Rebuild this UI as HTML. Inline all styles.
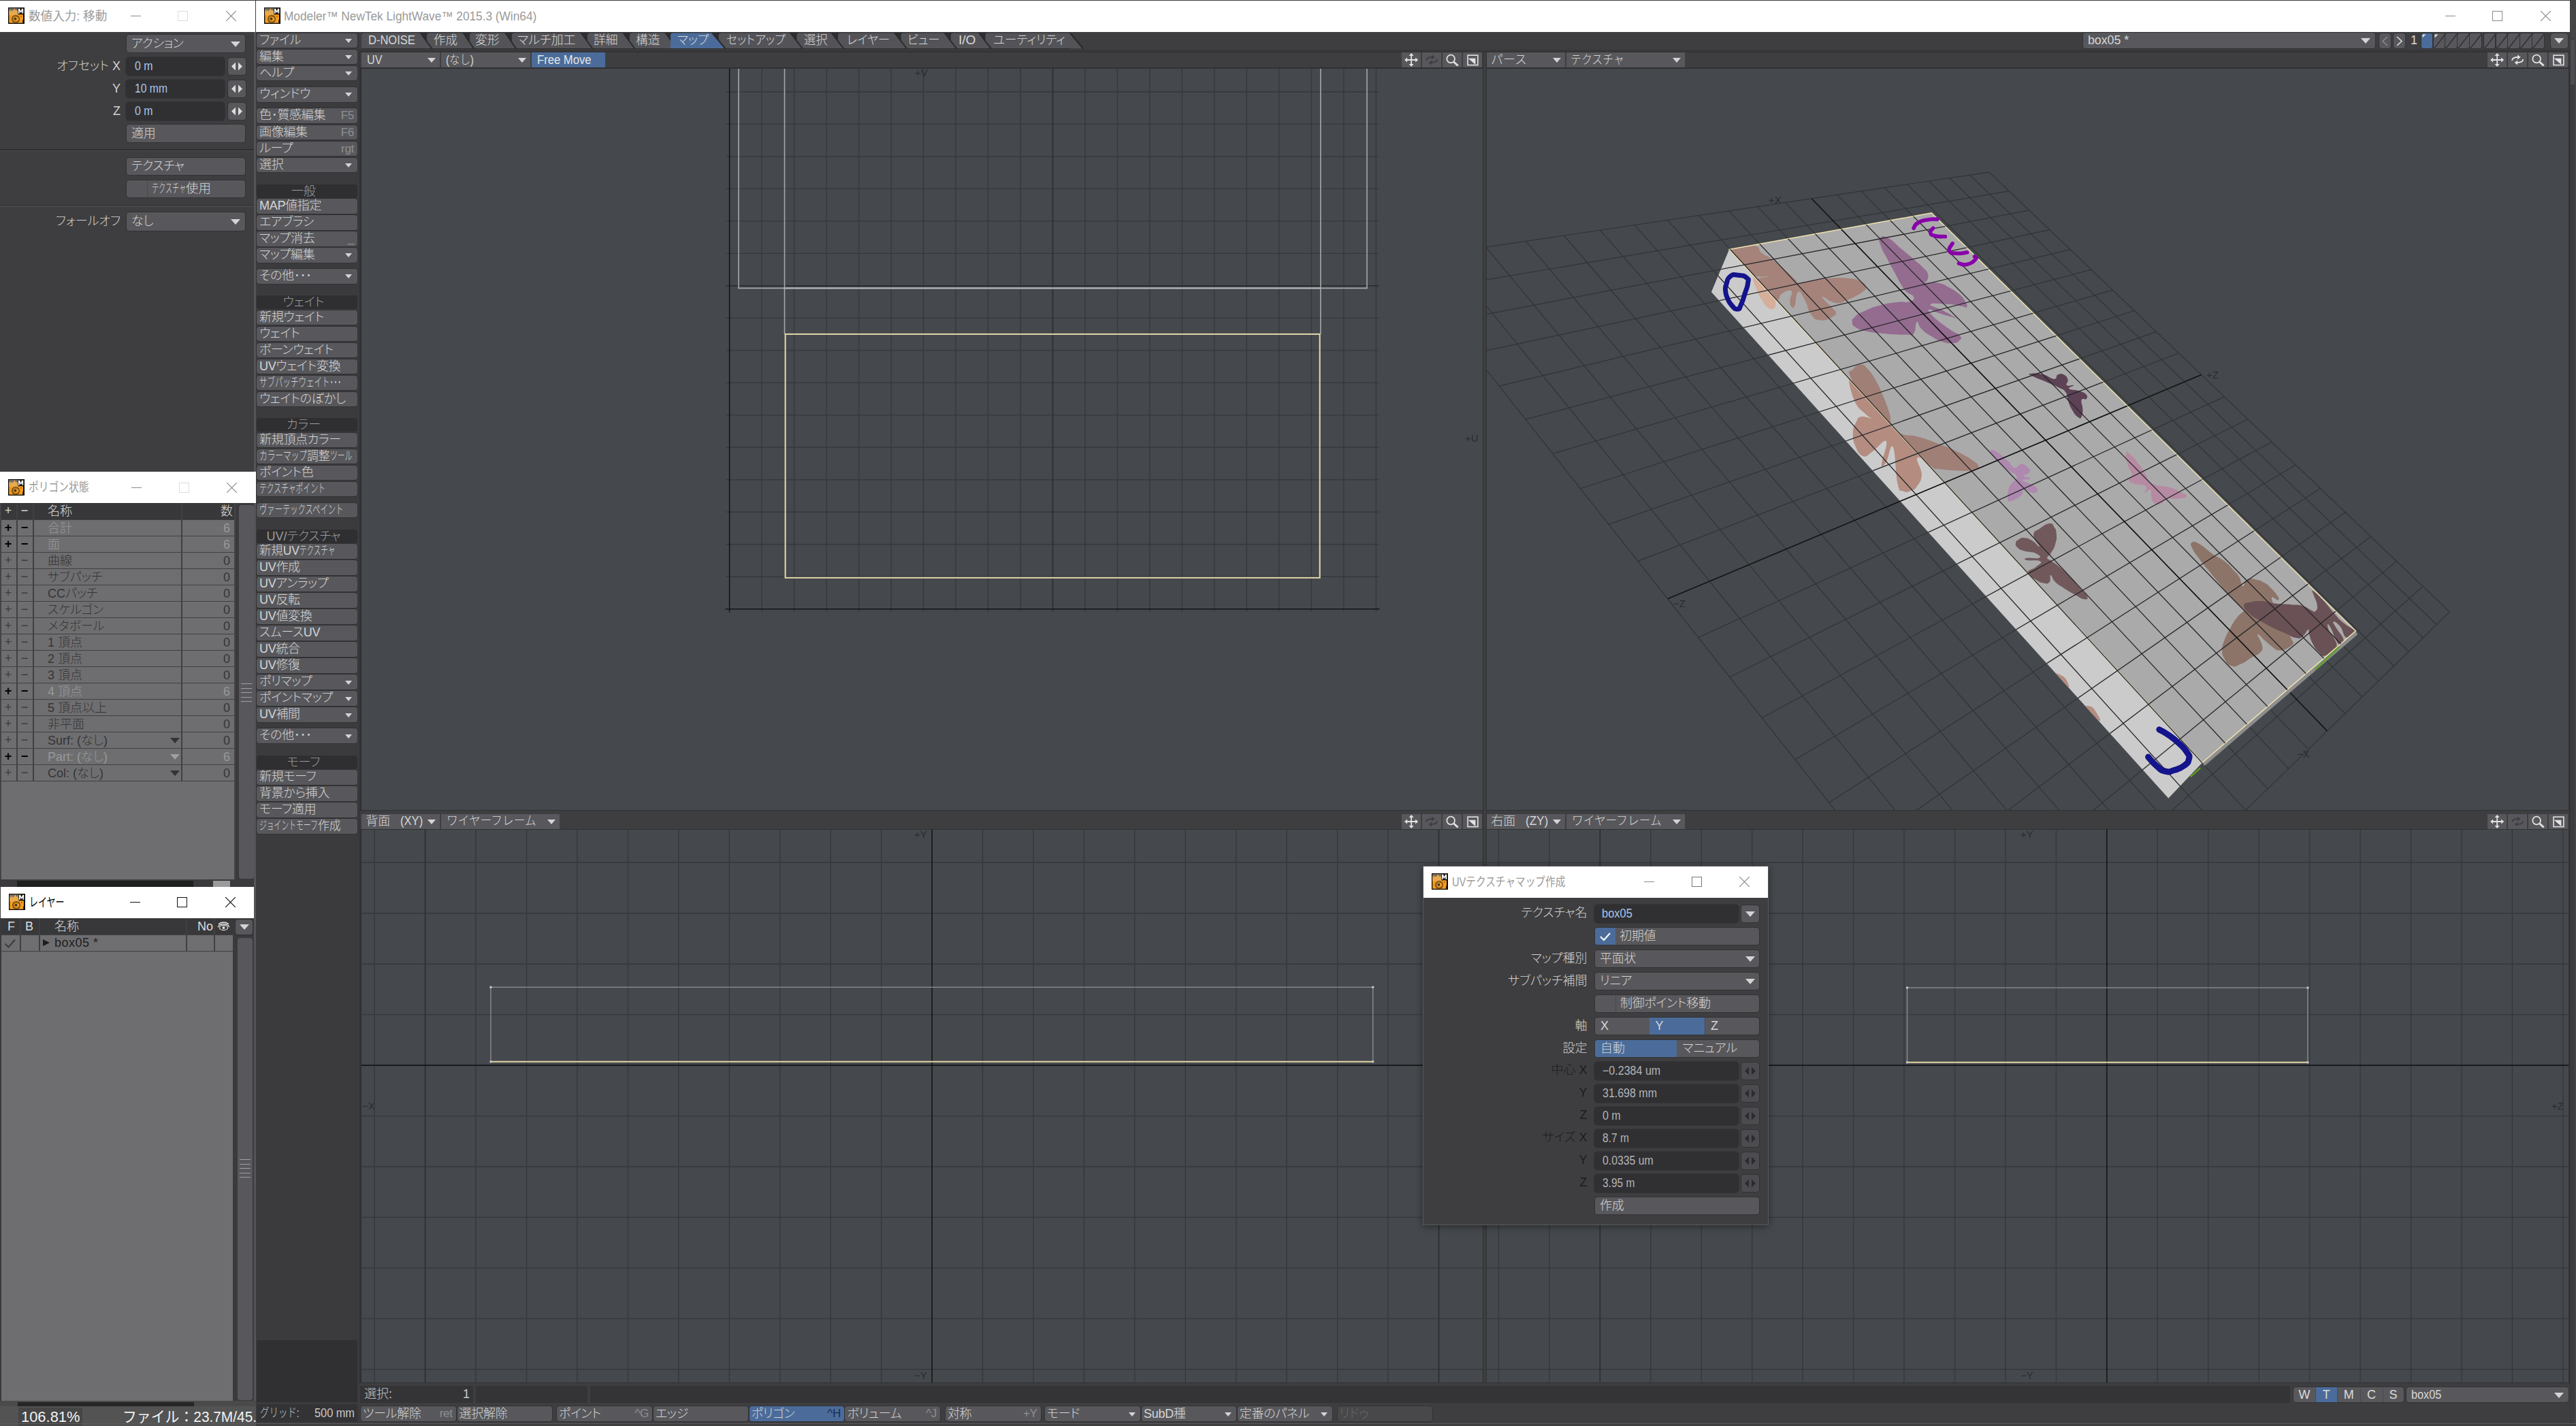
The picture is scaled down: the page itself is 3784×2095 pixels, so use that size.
<!DOCTYPE html><html lang="ja"><head><meta charset="utf-8"><title>LightWave Modeler</title><style>
html,body{margin:0;padding:0}
body{width:3784px;height:2095px;position:relative;overflow:hidden;background:#3e3e40;font-family:"Liberation Sans","Noto Sans CJK JP",sans-serif;font-size:18px;color:#d6d6d6;font-weight:300}
div,span,i,svg{position:absolute}
.a{position:absolute}
.tt{font-size:18px;white-space:nowrap;font-weight:400;font-family:"Liberation Sans","Noto Sans CJK JP",sans-serif}
.b{background:#58585c;border-radius:4px;white-space:nowrap;overflow:hidden;box-shadow:0 0 0 1px #323235;font-feature-settings:"palt";letter-spacing:-0.3px}
.b .t{top:0;}
.b .sc{right:5px;top:0;color:#8e8e92;font-size:17px}
.sel{background:#4b6c9a}
.sel .sc{color:#1c2a4e}
.hd{background:#2f2f31;border-radius:4px;text-align:center;color:#9c9c9e;white-space:nowrap;font-feature-settings:"palt"}
.tri{width:0;height:0;border-left:5px solid transparent;border-right:5px solid transparent;border-top:6px solid #d4d4d4}
.inp{background:#303033;border-radius:5px;box-shadow:0 0 0 1px #353538;color:#a9c6ec;white-space:nowrap;letter-spacing:.6px}
.lbl{white-space:nowrap;text-align:right;color:#d2d2d2;font-feature-settings:"palt"}
.row{background:#6e6e70;white-space:nowrap;color:#262626;font-feature-settings:"palt"}
.vl{font-size:14px;color:#2a2c2e;white-space:nowrap}
.f{position:static;display:inline-block;transform-origin:0 50%;white-space:nowrap;letter-spacing:0;font-feature-settings:normal}
</style></head><body>
<div class="a" style="left:3775px;top:0px;width:9px;height:2095px;background:#3c3c3e"></div>
<div class="a" style="left:3775px;top:0px;width:9px;height:56px;background:#454547"></div>
<div class="a" style="left:3775.5px;top:58px;width:6.5px;height:66px;background:#4e4e50"></div>
<div class="a" style="left:3782px;top:56px;width:2px;height:2039px;background:#444446"></div>
<div class="a" style="left:373px;top:47px;width:3px;height:2044px;background:#555558"></div>
<div class="a" style="left:0px;top:0px;width:375px;height:1.2px;background:#3c3c3e"></div>
<div class="a" style="left:0px;top:47px;width:373px;height:646px;background:#3e3e40"></div>
<div class="a" style="left:0px;top:1.2px;width:374.5px;height:45.8px;background:#fff"></div><svg class="a" style="left:12px;top:11px" width="24" height="24" viewBox="0 0 24 24"><rect width="24" height="24" fill="#060606"/><rect x="1.3" y="1.3" width="20.7" height="21.4" fill="#f29c1e"/><rect x="1.3" y="1.3" width="13.5" height="8" fill="#6a6a6c"/><rect x="14.2" y="1.3" width="8.6" height="9.2" fill="#151515"/><path d="M1.3 4l2.6 2-.9-3.4 3.2 2.8L9.5 1.4l1.6 3.2 2-1 1.1 3.4.4 4.6H1.3z" fill="#e9aa4c"/><path d="M15 1.8h1.9l1.7 3.4 1.7-3.4h1.9v7h-1.7V4.9l-1.4 2.7h-1l-1.4-2.7v3.9H15z" fill="#fff"/><circle cx="18.6" cy="13.6" r="3.3" fill="#f29c1e"/><circle cx="11" cy="17" r="5.3" fill="none" stroke="#5e3c12" stroke-width="1.3"/><path d="M14.5 14.5a4 4 0 1 0 .8 4" fill="none" stroke="#8a5a14" stroke-width="1"/><rect x="9" y="15" width="3.2" height="3.6" rx="1" fill="#33343a"/><path d="M17.6 12.4l1.4 1.6 1-1.6z" fill="#5e3c12"/><rect x="21.2" y="18.5" width="1.6" height="4.3" fill="#111"/></svg><div class="a tt" style="left:41.7px;top:1.2px;height:45.8px;line-height:46.8px;color:#9a9a9a"><span class="f" style="font-weight:400;transform:scaleX(0.977)">数値入力: 移動</span></div><div class="a" style="left:192px;top:23px;width:15px;height:1.3px;background:#8a8a8a"></div><div class="a" style="left:261px;top:16px;width:15px;height:15px;box-sizing:border-box;border:1.3px solid #dcdcdc"></div><svg class="a" style="left:332px;top:16px" width="15" height="15"><path d="M0 0L15 15M15 0L0 15" stroke="#8a8a8a" stroke-width="1.2"/></svg>
<div class="b " style="left:186px;top:51px;width:174px;height:26px;line-height:26px;"><span class="t" style="left:7px;">アクション</span><i class="tri" style="right:7px;top:9.5px;border-left-width:7px;border-right-width:7px;border-top:8px solid #d4d4d4"></i></div>
<div class="lbl" style="left:20px;top:83.5px;width:157px;height:27px;line-height:27px">オフセット X</div>
<div class="inp" style="left:185px;top:83.5px;width:145px;height:27px;line-height:27px"><span class="t" style="left:13px"><span class="f" style=";transform:scaleX(0.883)">0 m</span></span></div>
<div class="b" style="left:334.5px;top:85px;width:26px;height:25px;"><svg width="26" height="25"><path d="M5 12.5l6-6v12zM21 12.5l-6-6v12z" fill="#dcdcdc"/></svg></div>
<div class="lbl" style="left:20px;top:116.5px;width:157px;height:27px;line-height:27px">Y</div>
<div class="inp" style="left:185px;top:116.5px;width:145px;height:27px;line-height:27px"><span class="t" style="left:13px"><span class="f" style=";transform:scaleX(0.872)">10 mm</span></span></div>
<div class="b" style="left:334.5px;top:118px;width:26px;height:25px;"><svg width="26" height="25"><path d="M5 12.5l6-6v12zM21 12.5l-6-6v12z" fill="#dcdcdc"/></svg></div>
<div class="lbl" style="left:20px;top:149.5px;width:157px;height:27px;line-height:27px">Z</div>
<div class="inp" style="left:185px;top:149.5px;width:145px;height:27px;line-height:27px"><span class="t" style="left:13px"><span class="f" style=";transform:scaleX(0.883)">0 m</span></span></div>
<div class="b" style="left:334.5px;top:151px;width:26px;height:25px;"><svg width="26" height="25"><path d="M5 12.5l6-6v12zM21 12.5l-6-6v12z" fill="#dcdcdc"/></svg></div>
<div class="b " style="left:186px;top:183px;width:174px;height:26px;line-height:26px;"><span class="t" style="left:7px;">適用</span></div>
<div class="a" style="left:0px;top:219px;width:373px;height:1.5px;background:#2e2e30"></div>
<div class="a" style="left:0px;top:220.5px;width:373px;height:1.5px;background:#4a4a4c"></div>
<div class="b " style="left:186px;top:231.5px;width:174px;height:25.5px;line-height:25.5px;"><span class="t" style="left:7px;">テクスチャ</span></div>
<div class="b " style="left:186px;top:264.5px;width:174px;height:25.5px;line-height:25.5px;"><span class="t" style="left:37px;"><span style="position:static;display:inline-block;width:50.2px;height:1em;vertical-align:baseline;white-space:nowrap"><span class="f" style=";transform:scaleX(0.562)">テクスチャ</span></span><span style="position:static;display:inline-block;width:36.9px;height:1em;vertical-align:baseline;white-space:nowrap"><span class="f" style=";transform:scaleX(1.025)">使用</span></span></span></div>
<div class="a" style="left:216px;top:265px;width:1px;height:25px;background:#4a4a4e"></div>
<div class="a" style="left:0px;top:300.5px;width:373px;height:1.5px;background:#2e2e30"></div>
<div class="a" style="left:0px;top:302px;width:373px;height:1.5px;background:#4a4a4c"></div>
<div class="lbl" style="left:20px;top:312px;width:157px;height:26.5px;line-height:26.5px">フォールオフ</div>
<div class="b " style="left:186px;top:312px;width:174px;height:26.5px;line-height:26.5px;"><span class="t" style="left:7px;">なし</span><i class="tri" style="right:7px;top:9.8px;border-left-width:7px;border-right-width:7px;border-top:8px solid #d4d4d4"></i></div>
<div class="a" style="left:0px;top:693px;width:375.5px;height:46px;background:#fff"></div><svg class="a" style="left:12px;top:703.5px" width="24" height="24" viewBox="0 0 24 24"><rect width="24" height="24" fill="#060606"/><rect x="1.3" y="1.3" width="20.7" height="21.4" fill="#f29c1e"/><rect x="1.3" y="1.3" width="13.5" height="8" fill="#6a6a6c"/><rect x="14.2" y="1.3" width="8.6" height="9.2" fill="#151515"/><path d="M1.3 4l2.6 2-.9-3.4 3.2 2.8L9.5 1.4l1.6 3.2 2-1 1.1 3.4.4 4.6H1.3z" fill="#e9aa4c"/><path d="M15 1.8h1.9l1.7 3.4 1.7-3.4h1.9v7h-1.7V4.9l-1.4 2.7h-1l-1.4-2.7v3.9H15z" fill="#fff"/><circle cx="18.6" cy="13.6" r="3.3" fill="#f29c1e"/><circle cx="11" cy="17" r="5.3" fill="none" stroke="#5e3c12" stroke-width="1.3"/><path d="M14.5 14.5a4 4 0 1 0 .8 4" fill="none" stroke="#8a5a14" stroke-width="1"/><rect x="9" y="15" width="3.2" height="3.6" rx="1" fill="#33343a"/><path d="M17.6 12.4l1.4 1.6 1-1.6z" fill="#5e3c12"/><rect x="21.2" y="18.5" width="1.6" height="4.3" fill="#111"/></svg><div class="a tt" style="left:41.8px;top:693px;height:46px;line-height:47px;color:#9a9a9a"><span class="f" style="font-weight:400;transform:scaleX(0.819)">ポリゴン状態</span></div><div class="a" style="left:193px;top:715.5px;width:15px;height:1.3px;background:#8a8a8a"></div><div class="a" style="left:262.5px;top:708.5px;width:15px;height:15px;box-sizing:border-box;border:1.3px solid #dcdcdc"></div><svg class="a" style="left:333px;top:708.5px" width="15" height="15"><path d="M0 0L15 15M15 0L0 15" stroke="#8a8a8a" stroke-width="1.2"/></svg>
<div class="a" style="left:0px;top:739px;width:373px;height:564px;background:#3a3a3c"></div>
<div class="a" style="left:1px;top:739px;width:343.5px;height:553.5px;background:#6e6e70"></div>
<div class="a" style="left:1px;top:739px;width:343.5px;height:24.5px;background:#38383a"></div>
<div class="a" style="left:0;top:739px;width:24px;height:24px;line-height:23px;text-align:center;color:#d4d4d4;font-weight:400">+</div>
<div class="a" style="left:24px;top:739px;width:24px;height:24px;line-height:23px;text-align:center;color:#d4d4d4;font-weight:400">−</div>
<div class="a" style="left:70px;top:739px;height:24px;line-height:24px;color:#dedede;font-weight:300">名称</div>
<div class="a" style="left:300px;top:739px;width:42px;text-align:right;height:24px;line-height:24px;color:#dedede;font-weight:300">数</div>
<div class="a" style="left:0;top:763.5px;width:24px;height:24px;line-height:23px;text-align:center;color:#000;font-weight:700">+</div><div class="a" style="left:24px;top:763.5px;width:24px;height:24px;line-height:23px;text-align:center;color:#000;font-weight:700">−</div><div class="a" style="left:70px;top:763.5px;height:24px;line-height:24px;color:#98989a;white-space:nowrap;font-feature-settings:'palt'">合計</div><div class="a" style="left:300px;top:763.5px;width:38px;text-align:right;height:24px;line-height:24px;color:#98989a">6</div><div class="a" style="left:1px;top:786.5px;width:343.5px;height:1.6px;background:#404042"></div>
<div class="a" style="left:0;top:787.5px;width:24px;height:24px;line-height:23px;text-align:center;color:#000;font-weight:700">+</div><div class="a" style="left:24px;top:787.5px;width:24px;height:24px;line-height:23px;text-align:center;color:#000;font-weight:700">−</div><div class="a" style="left:70px;top:787.5px;height:24px;line-height:24px;color:#98989a;white-space:nowrap;font-feature-settings:'palt'">面</div><div class="a" style="left:300px;top:787.5px;width:38px;text-align:right;height:24px;line-height:24px;color:#98989a">6</div><div class="a" style="left:1px;top:810.5px;width:343.5px;height:1.6px;background:#404042"></div>
<div class="a" style="left:0;top:811.5px;width:24px;height:24px;line-height:23px;text-align:center;color:#3c3c3e;font-weight:300">+</div><div class="a" style="left:24px;top:811.5px;width:24px;height:24px;line-height:23px;text-align:center;color:#3c3c3e;font-weight:300">−</div><div class="a" style="left:70px;top:811.5px;height:24px;line-height:24px;color:#343436;white-space:nowrap;font-feature-settings:'palt'">曲線</div><div class="a" style="left:300px;top:811.5px;width:38px;text-align:right;height:24px;line-height:24px;color:#343436">0</div><div class="a" style="left:1px;top:834.5px;width:343.5px;height:1.6px;background:#404042"></div>
<div class="a" style="left:0;top:835.5px;width:24px;height:24px;line-height:23px;text-align:center;color:#3c3c3e;font-weight:300">+</div><div class="a" style="left:24px;top:835.5px;width:24px;height:24px;line-height:23px;text-align:center;color:#3c3c3e;font-weight:300">−</div><div class="a" style="left:70px;top:835.5px;height:24px;line-height:24px;color:#343436;white-space:nowrap;font-feature-settings:'palt'">サブパッチ</div><div class="a" style="left:300px;top:835.5px;width:38px;text-align:right;height:24px;line-height:24px;color:#343436">0</div><div class="a" style="left:1px;top:858.5px;width:343.5px;height:1.6px;background:#404042"></div>
<div class="a" style="left:0;top:859.5px;width:24px;height:24px;line-height:23px;text-align:center;color:#3c3c3e;font-weight:300">+</div><div class="a" style="left:24px;top:859.5px;width:24px;height:24px;line-height:23px;text-align:center;color:#3c3c3e;font-weight:300">−</div><div class="a" style="left:70px;top:859.5px;height:24px;line-height:24px;color:#343436;white-space:nowrap;font-feature-settings:'palt'">CCパッチ</div><div class="a" style="left:300px;top:859.5px;width:38px;text-align:right;height:24px;line-height:24px;color:#343436">0</div><div class="a" style="left:1px;top:882.5px;width:343.5px;height:1.6px;background:#404042"></div>
<div class="a" style="left:0;top:883.5px;width:24px;height:24px;line-height:23px;text-align:center;color:#3c3c3e;font-weight:300">+</div><div class="a" style="left:24px;top:883.5px;width:24px;height:24px;line-height:23px;text-align:center;color:#3c3c3e;font-weight:300">−</div><div class="a" style="left:70px;top:883.5px;height:24px;line-height:24px;color:#343436;white-space:nowrap;font-feature-settings:'palt'">スケルゴン</div><div class="a" style="left:300px;top:883.5px;width:38px;text-align:right;height:24px;line-height:24px;color:#343436">0</div><div class="a" style="left:1px;top:906.5px;width:343.5px;height:1.6px;background:#404042"></div>
<div class="a" style="left:0;top:907.5px;width:24px;height:24px;line-height:23px;text-align:center;color:#3c3c3e;font-weight:300">+</div><div class="a" style="left:24px;top:907.5px;width:24px;height:24px;line-height:23px;text-align:center;color:#3c3c3e;font-weight:300">−</div><div class="a" style="left:70px;top:907.5px;height:24px;line-height:24px;color:#343436;white-space:nowrap;font-feature-settings:'palt'">メタボール</div><div class="a" style="left:300px;top:907.5px;width:38px;text-align:right;height:24px;line-height:24px;color:#343436">0</div><div class="a" style="left:1px;top:930.5px;width:343.5px;height:1.6px;background:#404042"></div>
<div class="a" style="left:0;top:931.5px;width:24px;height:24px;line-height:23px;text-align:center;color:#3c3c3e;font-weight:300">+</div><div class="a" style="left:24px;top:931.5px;width:24px;height:24px;line-height:23px;text-align:center;color:#3c3c3e;font-weight:300">−</div><div class="a" style="left:70px;top:931.5px;height:24px;line-height:24px;color:#343436;white-space:nowrap;font-feature-settings:'palt'">1 頂点</div><div class="a" style="left:300px;top:931.5px;width:38px;text-align:right;height:24px;line-height:24px;color:#343436">0</div><div class="a" style="left:1px;top:954.5px;width:343.5px;height:1.6px;background:#404042"></div>
<div class="a" style="left:0;top:955.5px;width:24px;height:24px;line-height:23px;text-align:center;color:#3c3c3e;font-weight:300">+</div><div class="a" style="left:24px;top:955.5px;width:24px;height:24px;line-height:23px;text-align:center;color:#3c3c3e;font-weight:300">−</div><div class="a" style="left:70px;top:955.5px;height:24px;line-height:24px;color:#343436;white-space:nowrap;font-feature-settings:'palt'">2 頂点</div><div class="a" style="left:300px;top:955.5px;width:38px;text-align:right;height:24px;line-height:24px;color:#343436">0</div><div class="a" style="left:1px;top:978.5px;width:343.5px;height:1.6px;background:#404042"></div>
<div class="a" style="left:0;top:979.5px;width:24px;height:24px;line-height:23px;text-align:center;color:#3c3c3e;font-weight:300">+</div><div class="a" style="left:24px;top:979.5px;width:24px;height:24px;line-height:23px;text-align:center;color:#3c3c3e;font-weight:300">−</div><div class="a" style="left:70px;top:979.5px;height:24px;line-height:24px;color:#343436;white-space:nowrap;font-feature-settings:'palt'">3 頂点</div><div class="a" style="left:300px;top:979.5px;width:38px;text-align:right;height:24px;line-height:24px;color:#343436">0</div><div class="a" style="left:1px;top:1002.5px;width:343.5px;height:1.6px;background:#404042"></div>
<div class="a" style="left:0;top:1003.5px;width:24px;height:24px;line-height:23px;text-align:center;color:#000;font-weight:700">+</div><div class="a" style="left:24px;top:1003.5px;width:24px;height:24px;line-height:23px;text-align:center;color:#000;font-weight:700">−</div><div class="a" style="left:70px;top:1003.5px;height:24px;line-height:24px;color:#98989a;white-space:nowrap;font-feature-settings:'palt'">4 頂点</div><div class="a" style="left:300px;top:1003.5px;width:38px;text-align:right;height:24px;line-height:24px;color:#98989a">6</div><div class="a" style="left:1px;top:1026.5px;width:343.5px;height:1.6px;background:#404042"></div>
<div class="a" style="left:0;top:1027.5px;width:24px;height:24px;line-height:23px;text-align:center;color:#3c3c3e;font-weight:300">+</div><div class="a" style="left:24px;top:1027.5px;width:24px;height:24px;line-height:23px;text-align:center;color:#3c3c3e;font-weight:300">−</div><div class="a" style="left:70px;top:1027.5px;height:24px;line-height:24px;color:#343436;white-space:nowrap;font-feature-settings:'palt'">5 頂点以上</div><div class="a" style="left:300px;top:1027.5px;width:38px;text-align:right;height:24px;line-height:24px;color:#343436">0</div><div class="a" style="left:1px;top:1050.5px;width:343.5px;height:1.6px;background:#404042"></div>
<div class="a" style="left:0;top:1051.5px;width:24px;height:24px;line-height:23px;text-align:center;color:#3c3c3e;font-weight:300">+</div><div class="a" style="left:24px;top:1051.5px;width:24px;height:24px;line-height:23px;text-align:center;color:#3c3c3e;font-weight:300">−</div><div class="a" style="left:70px;top:1051.5px;height:24px;line-height:24px;color:#343436;white-space:nowrap;font-feature-settings:'palt'">非平面</div><div class="a" style="left:300px;top:1051.5px;width:38px;text-align:right;height:24px;line-height:24px;color:#343436">0</div><div class="a" style="left:1px;top:1074.5px;width:343.5px;height:1.6px;background:#404042"></div>
<div class="a" style="left:0;top:1075.5px;width:24px;height:24px;line-height:23px;text-align:center;color:#3c3c3e;font-weight:300">+</div><div class="a" style="left:24px;top:1075.5px;width:24px;height:24px;line-height:23px;text-align:center;color:#3c3c3e;font-weight:300">−</div><div class="a" style="left:70px;top:1075.5px;height:24px;line-height:24px;color:#343436;white-space:nowrap;font-feature-settings:'palt'">Surf: (なし)</div><div class="a" style="left:300px;top:1075.5px;width:38px;text-align:right;height:24px;line-height:24px;color:#343436">0</div><i class="tri" style="left:250px;top:1083.5px;border-left-width:7px;border-right-width:7px;border-top:8px solid #333335"></i><div class="a" style="left:1px;top:1098.5px;width:343.5px;height:1.6px;background:#404042"></div>
<div class="a" style="left:0;top:1099.5px;width:24px;height:24px;line-height:23px;text-align:center;color:#000;font-weight:700">+</div><div class="a" style="left:24px;top:1099.5px;width:24px;height:24px;line-height:23px;text-align:center;color:#000;font-weight:700">−</div><div class="a" style="left:70px;top:1099.5px;height:24px;line-height:24px;color:#98989a;white-space:nowrap;font-feature-settings:'palt'">Part: (なし)</div><div class="a" style="left:300px;top:1099.5px;width:38px;text-align:right;height:24px;line-height:24px;color:#98989a">6</div><i class="tri" style="left:250px;top:1107.5px;border-left-width:7px;border-right-width:7px;border-top:8px solid #a0a0a2"></i><div class="a" style="left:1px;top:1122.5px;width:343.5px;height:1.6px;background:#404042"></div>
<div class="a" style="left:0;top:1123.5px;width:24px;height:24px;line-height:23px;text-align:center;color:#3c3c3e;font-weight:300">+</div><div class="a" style="left:24px;top:1123.5px;width:24px;height:24px;line-height:23px;text-align:center;color:#3c3c3e;font-weight:300">−</div><div class="a" style="left:70px;top:1123.5px;height:24px;line-height:24px;color:#343436;white-space:nowrap;font-feature-settings:'palt'">Col: (なし)</div><div class="a" style="left:300px;top:1123.5px;width:38px;text-align:right;height:24px;line-height:24px;color:#343436">0</div><i class="tri" style="left:250px;top:1131.5px;border-left-width:7px;border-right-width:7px;border-top:8px solid #333335"></i><div class="a" style="left:1px;top:1146.5px;width:343.5px;height:1.6px;background:#404042"></div>
<div class="a" style="left:1px;top:762.5px;width:343.5px;height:1.6px;background:#404042"></div>
<div class="a" style="left:23.5px;top:739px;width:2px;height:408.5px;background:#404042"></div><div class="a" style="left:47.5px;top:739px;width:2px;height:408.5px;background:#404042"></div><div class="a" style="left:266px;top:739px;width:2px;height:408.5px;background:#404042"></div>
<div class="a" style="left:0px;top:739px;width:2px;height:553.5px;background:#444446"></div>
<div class="a" style="left:343.5px;top:739px;width:2px;height:553.5px;background:#444446"></div>
<div class="a" style="left:351px;top:742px;width:22px;height:549px;background:#58585c;border-radius:4px"></div>
<div class="a" style="left:354px;top:1004px;width:16px;height:1.3px;background:#a0a0a2"></div>
<div class="a" style="left:354px;top:1010.5px;width:16px;height:1.3px;background:#a0a0a2"></div>
<div class="a" style="left:354px;top:1017px;width:16px;height:1.3px;background:#a0a0a2"></div>
<div class="a" style="left:354px;top:1023.5px;width:16px;height:1.3px;background:#a0a0a2"></div>
<div class="a" style="left:354px;top:1030px;width:16px;height:1.3px;background:#a0a0a2"></div>
<div class="a" style="left:0px;top:1292px;width:373px;height:11px;background:#3a3a3c"></div>
<div class="a" style="left:25px;top:1294px;width:259px;height:9px;background:#1e2020"></div>
<div class="a" style="left:313px;top:1294px;width:25px;height:9px;background:#9a9c9c"></div>
<div class="a" style="left:1px;top:1303px;width:372px;height:46px;background:#fff"></div><svg class="a" style="left:13px;top:1313px" width="24" height="24" viewBox="0 0 24 24"><rect width="24" height="24" fill="#060606"/><rect x="1.3" y="1.3" width="20.7" height="21.4" fill="#f29c1e"/><rect x="1.3" y="1.3" width="13.5" height="8" fill="#6a6a6c"/><rect x="14.2" y="1.3" width="8.6" height="9.2" fill="#151515"/><path d="M1.3 4l2.6 2-.9-3.4 3.2 2.8L9.5 1.4l1.6 3.2 2-1 1.1 3.4.4 4.6H1.3z" fill="#e9aa4c"/><path d="M15 1.8h1.9l1.7 3.4 1.7-3.4h1.9v7h-1.7V4.9l-1.4 2.7h-1l-1.4-2.7v3.9H15z" fill="#fff"/><circle cx="18.6" cy="13.6" r="3.3" fill="#f29c1e"/><circle cx="11" cy="17" r="5.3" fill="none" stroke="#5e3c12" stroke-width="1.3"/><path d="M14.5 14.5a4 4 0 1 0 .8 4" fill="none" stroke="#8a5a14" stroke-width="1"/><rect x="9" y="15" width="3.2" height="3.6" rx="1" fill="#33343a"/><path d="M17.6 12.4l1.4 1.6 1-1.6z" fill="#5e3c12"/><rect x="21.2" y="18.5" width="1.6" height="4.3" fill="#111"/></svg><div class="a tt" style="left:42.8px;top:1303px;height:46px;line-height:47px;color:#000"><span class="f" style="font-weight:400;transform:scaleX(0.722)">レイヤー</span></div><div class="a" style="left:191px;top:1325px;width:15px;height:1.3px;background:#111"></div><div class="a" style="left:260px;top:1318px;width:15px;height:15px;box-sizing:border-box;border:1.3px solid #111"></div><svg class="a" style="left:331px;top:1318px" width="15" height="15"><path d="M0 0L15 15M15 0L0 15" stroke="#111" stroke-width="1.2"/></svg>
<div class="a" style="left:0px;top:1349px;width:373px;height:710px;background:#3a3a3c"></div>
<div class="a" style="left:2px;top:1349px;width:340px;height:709px;background:#6e6e70"></div>
<div class="a" style="left:2px;top:1349px;width:340px;height:24.5px;background:#38383a"></div>
<div class="a" style="left:29px;top:1349px;width:2px;height:48px;background:#404042"></div>
<div class="a" style="left:57px;top:1349px;width:2px;height:48px;background:#404042"></div>
<div class="a" style="left:273px;top:1349px;width:2px;height:48px;background:#404042"></div>
<div class="a" style="left:314px;top:1349px;width:2px;height:48px;background:#404042"></div>
<div class="a" style="left:2px;top:1372.5px;width:340px;height:1.6px;background:#404042"></div>
<div class="a" style="left:2px;top:1396.5px;width:340px;height:1.6px;background:#404042"></div>
<div class="a" style="left:11px;top:1349px;height:24px;line-height:24px;color:#dedede;font-weight:300">F</div>
<div class="a" style="left:37px;top:1349px;height:24px;line-height:24px;color:#dedede;font-weight:300">B</div>
<div class="a" style="left:80px;top:1349px;height:24px;line-height:24px;color:#dedede;font-weight:300">名称</div>
<div class="a" style="left:290px;top:1349px;height:24px;line-height:24px;color:#dedede;font-weight:300">No</div>
<svg class="a" style="left:319px;top:1353px" width="19" height="16" viewBox="0 0 19 16"><path d="M1 9c4-6 13-6 17 0M2 5c4-4 11-4 15 0" fill="none" stroke="#e0e0e0" stroke-width="1.4"/><ellipse cx="9.5" cy="10" rx="6" ry="3.6" fill="none" stroke="#e0e0e0" stroke-width="1.3"/><circle cx="9.5" cy="10" r="2" fill="#e0e0e0"/></svg>
<div class="b" style="left:346px;top:1351px;width:25px;height:21.5px;"><i class="tri" style="left:5.5px;top:7px;border-left-width:7px;border-right-width:7px;border-top:8px solid #d4d4d4"></i></div>
<svg class="a" style="left:6px;top:1378px" width="18" height="16"><path d="M1.5 8.5l5 5L16 2.5" fill="none" stroke="#3a3a3c" stroke-width="2"/></svg>
<svg class="a" style="left:63px;top:1379px" width="11" height="12"><path d="M0 1l10 5-10 5z" fill="#1e1e1e"/></svg>
<div class="a" style="left:80px;top:1373px;height:24px;line-height:24px;color:#1e1e1e;white-space:nowrap;letter-spacing:.5px">box05 *</div>
<div class="a" style="left:349px;top:1378px;width:22px;height:679px;background:#58585c;border-radius:4px"></div>
<div class="a" style="left:352px;top:1703px;width:16px;height:1.3px;background:#a0a0a2"></div>
<div class="a" style="left:352px;top:1709.5px;width:16px;height:1.3px;background:#a0a0a2"></div>
<div class="a" style="left:352px;top:1716px;width:16px;height:1.3px;background:#a0a0a2"></div>
<div class="a" style="left:352px;top:1722.5px;width:16px;height:1.3px;background:#a0a0a2"></div>
<div class="a" style="left:352px;top:1729px;width:16px;height:1.3px;background:#a0a0a2"></div>
<div class="a" style="left:0px;top:2058px;width:376px;height:37px;background:#535353"></div>
<div class="a" style="left:0px;top:2058px;width:376px;height:8px;background:#4a4a4a"></div>
<div class="a" style="left:26px;top:2059.5px;width:259px;height:6.3px;background:#262626"></div>
<div class="a" style="left:27px;top:2068px;width:94px;height:27px;background:#464646"></div>
<div class="a" style="left:31px;top:2068px;height:27px;line-height:28px;color:#f2f2f2;font-size:22px;font-weight:400;white-space:nowrap"><span class="f" style="font-size:22px;font-weight:400;transform:scaleX(0.996)">106.81%</span></div>
<div class="a" style="left:180px;top:2068px;height:27px;line-height:28px;color:#f2f2f2;font-size:22px;font-weight:400;white-space:nowrap;width:196px;overflow:hidden"><span class="f" style="font-size:22px;font-weight:400;transform:scaleX(0.948)">ファイル：23.7M/45.7M</span></div>
<div class="a" style="left:3773px;top:47px;width:2.5px;height:2044px;background:#38383a"></div>
<div class="a" style="left:376px;top:0px;width:3399px;height:2090px;background:#3e3e40"></div>
<div class="a" style="left:374.5px;top:0px;width:3402px;height:1.2px;background:#3c3c3e"></div>
<div class="a" style="left:376px;top:1.2px;width:3398.5px;height:45.8px;background:#fff"></div><svg class="a" style="left:388px;top:11px" width="24" height="24" viewBox="0 0 24 24"><rect width="24" height="24" fill="#060606"/><rect x="1.3" y="1.3" width="20.7" height="21.4" fill="#f29c1e"/><rect x="1.3" y="1.3" width="13.5" height="8" fill="#6a6a6c"/><rect x="14.2" y="1.3" width="8.6" height="9.2" fill="#151515"/><path d="M1.3 4l2.6 2-.9-3.4 3.2 2.8L9.5 1.4l1.6 3.2 2-1 1.1 3.4.4 4.6H1.3z" fill="#e9aa4c"/><path d="M15 1.8h1.9l1.7 3.4 1.7-3.4h1.9v7h-1.7V4.9l-1.4 2.7h-1l-1.4-2.7v3.9H15z" fill="#fff"/><circle cx="18.6" cy="13.6" r="3.3" fill="#f29c1e"/><circle cx="11" cy="17" r="5.3" fill="none" stroke="#5e3c12" stroke-width="1.3"/><path d="M14.5 14.5a4 4 0 1 0 .8 4" fill="none" stroke="#8a5a14" stroke-width="1"/><rect x="9" y="15" width="3.2" height="3.6" rx="1" fill="#33343a"/><path d="M17.6 12.4l1.4 1.6 1-1.6z" fill="#5e3c12"/><rect x="21.2" y="18.5" width="1.6" height="4.3" fill="#111"/></svg><div class="a tt" style="left:417.2px;top:1.2px;height:45.8px;line-height:46.8px;color:#9a9a9a"><span class="f" style="font-weight:400;transform:scaleX(0.958)">Modeler™ NewTek LightWave™ 2015.3 (Win64)</span></div><div class="a" style="left:3591.5px;top:23px;width:15px;height:1.3px;background:#8a8a8a"></div><div class="a" style="left:3661px;top:16px;width:15px;height:15px;box-sizing:border-box;border:1.3px solid #8a8a8a"></div><svg class="a" style="left:3732px;top:16px" width="15" height="15"><path d="M0 0L15 15M15 0L0 15" stroke="#8a8a8a" stroke-width="1.2"/></svg>
<div class="a" style="left:0px;top:2090.5px;width:3784px;height:1px;background:#5a5a5c"></div>
<div class="a" style="left:376px;top:2091.5px;width:3408px;height:4px;background:#3e3e40"></div>
<div class="a" style="left:376px;top:47px;width:152px;height:2043px;background:#3b3b3d"></div>
<div class="b " style="left:377px;top:48.5px;width:148px;height:21.7px;line-height:21.7px;"><span class="t" style="left:4px;">ファイル</span><i class="tri" style="right:8px;top:8.3px;border-left-width:5.5px;border-right-width:5.5px;border-top:6px solid #d4d4d4"></i></div>
<div class="b " style="left:377px;top:72.5px;width:148px;height:21.7px;line-height:21.7px;"><span class="t" style="left:4px;">編集</span><i class="tri" style="right:8px;top:8.3px;border-left-width:5.5px;border-right-width:5.5px;border-top:6px solid #d4d4d4"></i></div>
<div class="b " style="left:377px;top:96.5px;width:148px;height:21.7px;line-height:21.7px;"><span class="t" style="left:4px;">ヘルプ</span><i class="tri" style="right:8px;top:8.3px;border-left-width:5.5px;border-right-width:5.5px;border-top:6px solid #d4d4d4"></i></div>
<div class="b " style="left:377px;top:128px;width:148px;height:21.7px;line-height:21.7px;"><span class="t" style="left:4px;">ウィンドウ</span><i class="tri" style="right:8px;top:8.3px;border-left-width:5.5px;border-right-width:5.5px;border-top:6px solid #d4d4d4"></i></div>
<div class="b " style="left:377px;top:159px;width:148px;height:21.7px;line-height:21.7px;"><span class="t" style="left:4px;">色･質感編集</span><span class="sc">F5</span></div>
<div class="b " style="left:377px;top:183.5px;width:148px;height:21.7px;line-height:21.7px;"><span class="t" style="left:4px;">画像編集</span><span class="sc">F6</span></div>
<div class="b " style="left:377px;top:207.5px;width:148px;height:21.7px;line-height:21.7px;"><span class="t" style="left:4px;">ループ</span><span class="sc">rgt</span></div>
<div class="b " style="left:377px;top:231.7px;width:148px;height:21.7px;line-height:21.7px;"><span class="t" style="left:4px;">選択</span><i class="tri" style="right:8px;top:8.3px;border-left-width:5.5px;border-right-width:5.5px;border-top:6px solid #d4d4d4"></i></div>
<div class="hd" style="left:377px;top:270.5px;width:138px;height:20px;line-height:20px;padding-right:10px">一般</div>
<div class="b " style="left:377px;top:292px;width:148px;height:21.7px;line-height:21.7px;"><span class="t" style="left:4px;">MAP値指定</span></div>
<div class="b " style="left:377px;top:316px;width:148px;height:21.7px;line-height:21.7px;"><span class="t" style="left:4px;">エアブラシ</span></div>
<div class="b " style="left:377px;top:340px;width:148px;height:21.7px;line-height:21.7px;"><span class="t" style="left:4px;">マップ消去</span><span class="sc">_</span></div>
<div class="b " style="left:377px;top:364px;width:148px;height:21.7px;line-height:21.7px;"><span class="t" style="left:4px;">マップ編集</span><i class="tri" style="right:8px;top:8.3px;border-left-width:5.5px;border-right-width:5.5px;border-top:6px solid #d4d4d4"></i></div>
<div class="b " style="left:377px;top:395px;width:148px;height:21.7px;line-height:21.7px;"><span class="t" style="left:4px;">その他･･･</span><i class="tri" style="right:8px;top:8.3px;border-left-width:5.5px;border-right-width:5.5px;border-top:6px solid #d4d4d4"></i></div>
<div class="hd" style="left:377px;top:434px;width:138px;height:20px;line-height:20px;padding-right:10px">ウェイト</div>
<div class="b " style="left:377px;top:455.5px;width:148px;height:21.7px;line-height:21.7px;"><span class="t" style="left:4px;">新規ウェイト</span></div>
<div class="b " style="left:377px;top:479.5px;width:148px;height:21.7px;line-height:21.7px;"><span class="t" style="left:4px;">ウェイト</span></div>
<div class="b " style="left:377px;top:503.5px;width:148px;height:21.7px;line-height:21.7px;"><span class="t" style="left:4px;">ボーンウェイト</span></div>
<div class="b " style="left:377px;top:527.5px;width:148px;height:21.7px;line-height:21.7px;"><span class="t" style="left:4px;">UVウェイト変換</span></div>
<div class="b " style="left:377px;top:551.5px;width:148px;height:21.7px;line-height:21.7px;"><span class="t" style="left:4px;"><span class="f" style=";transform:scaleX(0.638)">サブパッチウェイト･･･</span></span></div>
<div class="b " style="left:377px;top:575.5px;width:148px;height:21.7px;line-height:21.7px;"><span class="t" style="left:4px;">ウェイトのぼかし</span></div>
<div class="hd" style="left:377px;top:614px;width:138px;height:20px;line-height:20px;padding-right:10px">カラー</div>
<div class="b " style="left:377px;top:635.5px;width:148px;height:21.7px;line-height:21.7px;"><span class="t" style="left:4px;">新規頂点カラー</span></div>
<div class="b " style="left:377px;top:659.5px;width:148px;height:21.7px;line-height:21.7px;"><span class="t" style="left:4px;"><span style="position:static;display:inline-block;width:70px;height:1em;vertical-align:baseline;white-space:nowrap"><span class="f" style=";transform:scaleX(0.648)">カラーマップ</span></span><span style="position:static;display:inline-block;width:33.7px;height:1em;vertical-align:baseline;white-space:nowrap"><span class="f" style=";transform:scaleX(0.936)">調整</span></span><span style="position:static;display:inline-block;width:32.3px;height:1em;vertical-align:baseline;white-space:nowrap"><span class="f" style=";transform:scaleX(0.598)">ツール</span></span></span></div>
<div class="b " style="left:377px;top:683.5px;width:148px;height:21.7px;line-height:21.7px;"><span class="t" style="left:4px;">ポイント色</span></div>
<div class="b " style="left:377px;top:707.5px;width:148px;height:21.7px;line-height:21.7px;"><span class="t" style="left:4px;"><span class="f" style=";transform:scaleX(0.600)">テクスチャポイント</span></span></div>
<div class="b " style="left:377px;top:738.7px;width:148px;height:21.7px;line-height:21.7px;"><span class="t" style="left:4px;"><span class="f" style=";transform:scaleX(0.629)">ヴァーテックスペイント</span></span></div>
<div class="hd" style="left:377px;top:777.7px;width:138px;height:20px;line-height:20px;padding-right:10px">UV/テクスチャ</div>
<div class="b " style="left:377px;top:799.4px;width:148px;height:21.7px;line-height:21.7px;"><span class="t" style="left:4px;"><span style="position:static;display:inline-block;width:58.9px;height:1em;vertical-align:baseline;white-space:nowrap"><span class="f" style=";transform:scaleX(0.965)">新規UV</span></span><span style="position:static;display:inline-block;width:52.2px;height:1em;vertical-align:baseline;white-space:nowrap"><span class="f" style=";transform:scaleX(0.585)">テクスチャ</span></span></span></div>
<div class="b " style="left:377px;top:823.4px;width:148px;height:21.7px;line-height:21.7px;"><span class="t" style="left:4px;">UV作成</span></div>
<div class="b " style="left:377px;top:847.4px;width:148px;height:21.7px;line-height:21.7px;"><span class="t" style="left:4px;">UVアンラップ</span></div>
<div class="b " style="left:377px;top:871.4px;width:148px;height:21.7px;line-height:21.7px;"><span class="t" style="left:4px;">UV反転</span></div>
<div class="b " style="left:377px;top:895.4px;width:148px;height:21.7px;line-height:21.7px;"><span class="t" style="left:4px;">UV値変換</span></div>
<div class="b " style="left:377px;top:919.4px;width:148px;height:21.7px;line-height:21.7px;"><span class="t" style="left:4px;">スムースUV</span></div>
<div class="b " style="left:377px;top:943.4px;width:148px;height:21.7px;line-height:21.7px;"><span class="t" style="left:4px;">UV統合</span></div>
<div class="b " style="left:377px;top:967.4px;width:148px;height:21.7px;line-height:21.7px;"><span class="t" style="left:4px;">UV修復</span></div>
<div class="b " style="left:377px;top:991.4px;width:148px;height:21.7px;line-height:21.7px;"><span class="t" style="left:4px;">ポリマップ</span><i class="tri" style="right:8px;top:8.3px;border-left-width:5.5px;border-right-width:5.5px;border-top:6px solid #d4d4d4"></i></div>
<div class="b " style="left:377px;top:1015.4px;width:148px;height:21.7px;line-height:21.7px;"><span class="t" style="left:4px;">ポイントマップ</span><i class="tri" style="right:8px;top:8.3px;border-left-width:5.5px;border-right-width:5.5px;border-top:6px solid #d4d4d4"></i></div>
<div class="b " style="left:377px;top:1039.4px;width:148px;height:21.7px;line-height:21.7px;"><span class="t" style="left:4px;">UV補間</span><i class="tri" style="right:8px;top:8.3px;border-left-width:5.5px;border-right-width:5.5px;border-top:6px solid #d4d4d4"></i></div>
<div class="b " style="left:377px;top:1070.3px;width:148px;height:21.7px;line-height:21.7px;"><span class="t" style="left:4px;">その他･･･</span><i class="tri" style="right:8px;top:8.3px;border-left-width:5.5px;border-right-width:5.5px;border-top:6px solid #d4d4d4"></i></div>
<div class="hd" style="left:377px;top:1110px;width:138px;height:20px;line-height:20px;padding-right:10px">モーフ</div>
<div class="b " style="left:377px;top:1131px;width:148px;height:21.7px;line-height:21.7px;"><span class="t" style="left:4px;">新規モーフ</span></div>
<div class="b " style="left:377px;top:1155px;width:148px;height:21.7px;line-height:21.7px;"><span class="t" style="left:4px;">背景から挿入</span></div>
<div class="b " style="left:377px;top:1179px;width:148px;height:21.7px;line-height:21.7px;"><span class="t" style="left:4px;">モーフ適用</span></div>
<div class="b " style="left:377px;top:1203px;width:148px;height:21.7px;line-height:21.7px;"><span class="t" style="left:4px;"><span style="position:static;display:inline-block;width:85.8px;height:1em;vertical-align:baseline;white-space:nowrap"><span class="f" style=";transform:scaleX(0.600)">ジョイントモーフ</span></span><span style="position:static;display:inline-block;width:33.7px;height:1em;vertical-align:baseline;white-space:nowrap"><span class="f" style=";transform:scaleX(0.936)">作成</span></span></span></div>
<div class="a" style="left:377px;top:1969px;width:148px;height:91px;background:#303032"></div>
<div class="a" style="left:377px;top:2063px;width:148px;height:26px;background:#333336;border-radius:3px"></div>
<div class="a" style="left:382px;top:2063px;height:26px;line-height:26px;white-space:nowrap;color:#c8c8c8;font-feature-settings:'palt'"><span class="f" style=";transform:scaleX(0.747)">グリッド:</span></div>
<div class="a" style="left:462px;top:2063px;width:60px;height:26px;line-height:26px;white-space:nowrap;color:#c8c8c8;letter-spacing:.5px"><span class="f" style=";transform:scaleX(0.907)">500 mm</span></div>
<div class="a" style="left:531px;top:47.5px;width:1041px;height:24px;background:#2e2e30"></div>
<svg class="a" style="left:528px;top:47px" width="1080" height="26" viewBox="528 47 1080 26"><path d="M1447.4 71V52Q1447.4 48.5 1450.9 48.5H1569.4Q1571.4 48.5 1572.9 50L1590.5 71z" fill="#545458"/><path d="M1396.8 71V52Q1396.8 48.5 1400.3 48.5H1435.4Q1437.4 48.5 1438.9 50L1455.5 71z" fill="#545458"/><path d="M1323.6 71V52Q1323.6 48.5 1327.1 48.5H1384.8Q1386.8 48.5 1388.3 50L1404.8 71z" fill="#545458"/><path d="M1231 71V52Q1231 48.5 1234.5 48.5H1311.6Q1313.6 48.5 1315.1 50L1331.6 71z" fill="#545458"/><path d="M1170.5 71V52Q1170.5 48.5 1174 48.5H1219Q1221 48.5 1222.5 50L1239 71z" fill="#545458"/><path d="M1055.8 71V52Q1055.8 48.5 1059.3 48.5H1158.5Q1160.5 48.5 1162 50L1178.5 71z" fill="#545458"/><path d="M925 71V52Q925 48.5 928.5 48.5H975Q977 48.5 978.5 50L994 71z" fill="#545458"/><path d="M863 71V52Q863 48.5 866.5 48.5H913Q915 48.5 916.5 50L932 71z" fill="#545458"/><path d="M751.8 71V52Q751.8 48.5 755.3 48.5H851Q853 48.5 854.5 50L870 71z" fill="#545458"/><path d="M690 71V52Q690 48.5 693.5 48.5H739.8Q741.8 48.5 743.3 50L757.6 71z" fill="#545458"/><path d="M627 71V52Q627 48.5 630.5 48.5H678Q680 48.5 681.5 50L695.6 71z" fill="#545458"/><path d="M531 71V52Q531 48.5 534.5 48.5H615Q617 48.5 618.5 50L634 71z" fill="#545458"/><path d="M618 49L634.5 71.5M681 49L696.1 71.5M742.8 49L758.1 71.5M854 49L870.5 71.5M916 49L932.5 71.5M978 49L994.5 71.5M1161.5 49L1179 71.5M1222 49L1239.5 71.5M1314.6 49L1332.1 71.5M1387.8 49L1405.3 71.5M1438.4 49L1456 71.5M1572.4 49L1591 71.5" stroke="#2a2a2c" stroke-width="2" fill="none"/><path d="M985 71V52Q985 48.5 988.5 48.5H1043.8Q1045.8 48.5 1047.3 50L1065 71z" fill="#4b6c9a"/><path d="M1046.8 49L1065.5 71.5" stroke="#2a2a2c" stroke-width="2" fill="none"/></svg>
<div class="a" style="left:541.4px;top:48px;height:23px;line-height:23px;white-space:nowrap;color:#d8d8d8"><span class="f" style="font-feature-settings:'palt';transform:scaleX(0.916)">D-NOISE</span></div>
<div class="a" style="left:637px;top:48px;height:23px;line-height:23px;white-space:nowrap;color:#d8d8d8"><span class="f" style="font-feature-settings:'palt';transform:scaleX(0.969)">作成</span></div>
<div class="a" style="left:698px;top:48px;height:23px;line-height:23px;white-space:nowrap;color:#d8d8d8"><span class="f" style="font-feature-settings:'palt';transform:scaleX(0.989)">変形</span></div>
<div class="a" style="left:759.8px;top:48px;height:23px;line-height:23px;white-space:nowrap;color:#d8d8d8"><span class="f" style="font-feature-settings:'palt';transform:scaleX(1.002)">マルチ加工</span></div>
<div class="a" style="left:872.4px;top:48px;height:23px;line-height:23px;white-space:nowrap;color:#d8d8d8"><span class="f" style="font-feature-settings:'palt';transform:scaleX(0.983)">詳細</span></div>
<div class="a" style="left:933.9px;top:48px;height:23px;line-height:23px;white-space:nowrap;color:#d8d8d8"><span class="f" style="font-feature-settings:'palt';transform:scaleX(0.983)">構造</span></div>
<div class="a" style="left:995px;top:48px;height:23px;line-height:23px;white-space:nowrap;color:#d8d8d8"><span class="f" style="font-feature-settings:'palt';transform:scaleX(0.986)">マップ</span></div>
<div class="a" style="left:1067px;top:48px;height:23px;line-height:23px;white-space:nowrap;color:#d8d8d8"><span class="f" style="font-feature-settings:'palt';transform:scaleX(0.936)">セットアップ</span></div>
<div class="a" style="left:1181.4px;top:48px;height:23px;line-height:23px;white-space:nowrap;color:#d8d8d8"><span class="f" style="font-feature-settings:'palt';transform:scaleX(0.964)">選択</span></div>
<div class="a" style="left:1243.8px;top:48px;height:23px;line-height:23px;white-space:nowrap;color:#d8d8d8"><span class="f" style="font-feature-settings:'palt';transform:scaleX(0.956)">レイヤー</span></div>
<div class="a" style="left:1332.7px;top:48px;height:23px;line-height:23px;white-space:nowrap;color:#d8d8d8"><span class="f" style="font-feature-settings:'palt';transform:scaleX(0.956)">ビュー</span></div>
<div class="a" style="left:1407.5px;top:48px;height:23px;line-height:23px;white-space:nowrap;color:#d8d8d8"><span class="f" style="font-feature-settings:'palt';transform:scaleX(1.058)">I/O</span></div>
<div class="a" style="left:1458.8px;top:48px;height:23px;line-height:23px;white-space:nowrap;color:#d8d8d8"><span class="f" style="font-feature-settings:'palt';transform:scaleX(0.976)">ユーティリティ</span></div>
<div class="b " style="left:3060px;top:48px;width:428.5px;height:23px;line-height:23px;"><span class="t" style="left:7px;"><span class="f" style=";transform:scaleX(0.986)">box05 *</span></span><i class="tri" style="right:7px;top:8px;border-left-width:7px;border-right-width:7px;border-top:8px solid #d4d4d4"></i></div>
<div class="b" style="left:3495px;top:48.5px;width:17px;height:22.5px;"><svg width="17" height="23"><path d="M12 5L5 11.5l7 6.5" fill="none" stroke="#8a8a8e" stroke-width="1.6"/></svg></div>
<div class="b" style="left:3516px;top:48.5px;width:17px;height:22.5px;"><svg width="17" height="23"><path d="M5 5l7 6.5-7 6.5" fill="none" stroke="#e0e0e0" stroke-width="1.6"/></svg></div>
<div class="a" style="left:3541px;top:48px;height:23px;line-height:23px;color:#d8d8d8">1</div>
<div class="b" style="left:3556.8px;top:48.5px;width:16.6px;height:22.5px;background:#4b6c9a;border-radius:3px"><svg width="17" height="23"><path d="M1.5 1.5h5l-5 5z" fill="#e0e0e0"/></svg></div>
<div class="b" style="left:3574.6px;top:48.5px;width:16.6px;height:22.5px;background:#58585c;border-radius:3px"><svg width="17" height="23"><path d="M0.5 22.5L16.5 2" stroke="#2c2c2e" stroke-width="1.3"/><path d="M1.5 1.5h5l-5 5z" fill="#e0e0e0"/></svg></div>
<div class="b" style="left:3592.4px;top:48.5px;width:16.6px;height:22.5px;background:#58585c;border-radius:3px"><svg width="17" height="23"><path d="M0.5 22.5L16.5 2" stroke="#2c2c2e" stroke-width="1.3"/></svg></div>
<div class="b" style="left:3610.2px;top:48.5px;width:16.6px;height:22.5px;background:#58585c;border-radius:3px"><svg width="17" height="23"><path d="M0.5 22.5L16.5 2" stroke="#2c2c2e" stroke-width="1.3"/></svg></div>
<div class="b" style="left:3628px;top:48.5px;width:16.6px;height:22.5px;background:#58585c;border-radius:3px"><svg width="17" height="23"><path d="M0.5 22.5L16.5 2" stroke="#2c2c2e" stroke-width="1.3"/></svg></div>
<div class="b" style="left:3648.8px;top:48.5px;width:16.6px;height:22.5px;background:#58585c;border-radius:3px"><svg width="17" height="23"><path d="M0.5 22.5L16.5 2" stroke="#2c2c2e" stroke-width="1.3"/></svg></div>
<div class="b" style="left:3666.6px;top:48.5px;width:16.6px;height:22.5px;background:#58585c;border-radius:3px"><svg width="17" height="23"><path d="M0.5 22.5L16.5 2" stroke="#2c2c2e" stroke-width="1.3"/></svg></div>
<div class="b" style="left:3684.4px;top:48.5px;width:16.6px;height:22.5px;background:#58585c;border-radius:3px"><svg width="17" height="23"><path d="M0.5 22.5L16.5 2" stroke="#2c2c2e" stroke-width="1.3"/></svg></div>
<div class="b" style="left:3702.2px;top:48.5px;width:16.6px;height:22.5px;background:#58585c;border-radius:3px"><svg width="17" height="23"><path d="M0.5 22.5L16.5 2" stroke="#2c2c2e" stroke-width="1.3"/></svg></div>
<div class="b" style="left:3720px;top:48.5px;width:16.6px;height:22.5px;background:#58585c;border-radius:3px"><svg width="17" height="23"><path d="M0.5 22.5L16.5 2" stroke="#2c2c2e" stroke-width="1.3"/></svg></div>
<div class="b" style="left:3746.6px;top:48.5px;width:25.5px;height:22.5px;"><i class="tri" style="left:5.5px;top:7.5px;border-left-width:7px;border-right-width:7px;border-top:8px solid #d4d4d4"></i></div>
<div class="a" style="left:528px;top:72.6px;width:3247px;height:4px;background:#38383a"></div>
<div class="a" style="left:528px;top:76.4px;width:3247px;height:1958px;background:#303032"></div>
<div class="a" style="left:529px;top:77.2px;width:3245px;height:22.3px;background:#3e3e40"></div>
<div class="a" style="left:529px;top:1191px;width:3245px;height:27.2px;background:#3e3e40"></div>
<svg class="a" style="left:531px;top:1219.4px;background:#45494d" width="1646.8" height="812.1" viewBox="531 1219.4 1646.8 812.1"><path d="M550.1 1219.4V2031.5M699 1219.4V2031.5M773.5 1219.4V2031.5M847.9 1219.4V2031.5M922.4 1219.4V2031.5M996.8 1219.4V2031.5M1071.3 1219.4V2031.5M1145.8 1219.4V2031.5M1220.2 1219.4V2031.5M1294.6 1219.4V2031.5M1443.5 1219.4V2031.5M1518 1219.4V2031.5M1592.4 1219.4V2031.5M1666.9 1219.4V2031.5M1741.3 1219.4V2031.5M1815.8 1219.4V2031.5M1890.2 1219.4V2031.5M1964.7 1219.4V2031.5M2039.2 1219.4V2031.5M531 1267.7H2177.8M531 1342.2H2177.8M531 1416.6H2177.8M531 1491H2177.8M531 1640H2177.8M531 1714.4H2177.8M531 1788.8H2177.8M531 1863.3H2177.8M531 1937.8H2177.8M531 2012.2H2177.8" stroke="#35393c" stroke-width="1.4" fill="none"/><path d="M624.6 1219.4V2031.5M2113.6 1219.4V2031.5" stroke="#2b2e30" stroke-width="1.6" fill="none"/><path d="M1369.1 1219.4V2031.5M531 1565.5H2177.8" stroke="#141516" stroke-width="1.6" fill="none"/><path d="M720.9 1560.2V1450.7H2016.8V1560.2" stroke="#909294" stroke-width="1.3" fill="none"/><path d="M720.9 1560.2H2016.8" stroke="#e4d6a4" stroke-width="2" fill="none"/><rect x="719.4" y="1449.2" width="3" height="3" fill="#c8c8c8"/><rect x="2015.3" y="1449.2" width="3" height="3" fill="#c8c8c8"/><rect x="719.4" y="1558.7" width="3" height="3" fill="#c8c8c8"/><rect x="2015.3" y="1558.7" width="3" height="3" fill="#c8c8c8"/><text x="1343" y="1231" font-size="15" fill="#2a2c2e" font-family="Liberation Sans,sans-serif">+Y</text><text x="1343" y="2026" font-size="15" fill="#2a2c2e" font-family="Liberation Sans,sans-serif">−Y</text><text x="532" y="1630" font-size="15" fill="#2a2c2e" font-family="Liberation Sans,sans-serif">−X</text></svg>
<svg class="a" style="left:2184px;top:1219.4px;background:#45494d" width="1589" height="812.1" viewBox="2184 1219.4 1589 812.1"><path d="M2201.4 1219.4V2031.5M2275.9 1219.4V2031.5M2424.8 1219.4V2031.5M2499.2 1219.4V2031.5M2573.7 1219.4V2031.5M2648.1 1219.4V2031.5M2722.6 1219.4V2031.5M2797 1219.4V2031.5M2871.5 1219.4V2031.5M2945.9 1219.4V2031.5M3020.4 1219.4V2031.5M3169.2 1219.4V2031.5M3243.7 1219.4V2031.5M3318.2 1219.4V2031.5M3392.6 1219.4V2031.5M3467.1 1219.4V2031.5M3541.5 1219.4V2031.5M3616 1219.4V2031.5M3690.4 1219.4V2031.5M3764.9 1219.4V2031.5M2184 1267.7H3773M2184 1342.2H3773M2184 1416.6H3773M2184 1491H3773M2184 1640H3773M2184 1714.4H3773M2184 1788.8H3773M2184 1863.3H3773M2184 1937.8H3773M2184 2012.2H3773" stroke="#35393c" stroke-width="1.4" fill="none"/><path d="M2350.3 1219.4V2031.5" stroke="#2b2e30" stroke-width="1.6" fill="none"/><path d="M3094.8 1219.4V2031.5M2184 1565.5H3773" stroke="#141516" stroke-width="1.6" fill="none"/><path d="M2801.5 1561.2V1451.5H3390V1561.2" stroke="#909294" stroke-width="1.3" fill="none"/><path d="M2801.5 1561.2H3390" stroke="#e4d6a4" stroke-width="2" fill="none"/><rect x="2800" y="1450" width="3" height="3" fill="#c8c8c8"/><rect x="3388.5" y="1450" width="3" height="3" fill="#c8c8c8"/><rect x="2800" y="1559.7" width="3" height="3" fill="#c8c8c8"/><rect x="3388.5" y="1559.7" width="3" height="3" fill="#c8c8c8"/><text x="2968" y="1231" font-size="15" fill="#2a2c2e" font-family="Liberation Sans,sans-serif">+Y</text><text x="2968" y="2026" font-size="15" fill="#2a2c2e" font-family="Liberation Sans,sans-serif">−Y</text><text x="3748" y="1630" font-size="15" fill="#2a2c2e" font-family="Liberation Sans,sans-serif">+Z</text></svg>
<svg class="a" style="left:531px;top:100.5px;background:#45494d" width="1646.8" height="1089.3" viewBox="531 100.5 1646.8 1089.3"><path d="M1119.1 100.5V898.3M1166.6 100.5V898.3M1214.1 100.5V898.3M1261.6 100.5V898.3M1309 100.5V898.3M1356.5 100.5V898.3M1404 100.5V898.3M1451.5 100.5V898.3M1499 100.5V898.3M1594 100.5V898.3M1641.5 100.5V898.3M1689 100.5V898.3M1736.5 100.5V898.3M1783.9 100.5V898.3M1831.4 100.5V898.3M1878.9 100.5V898.3M1926.4 100.5V898.3M1973.9 100.5V898.3M2021.4 100.5V898.3M1066.6 846.8H2025.4M1066.6 799.3H2025.4M1066.6 751.8H2025.4M1066.6 704.3H2025.4M1066.6 656.8H2025.4M1066.6 609.4H2025.4M1066.6 561.9H2025.4M1066.6 514.4H2025.4M1066.6 466.9H2025.4M1066.6 371.9H2025.4M1066.6 324.4H2025.4M1066.6 276.9H2025.4M1066.6 229.4H2025.4M1066.6 181.9H2025.4M1066.6 134.5H2025.4" stroke="#35393c" stroke-width="1.4" fill="none"/><path d="M1546.5 100.5V898.3M1066.6 419.4H2025.4" stroke="#2b2e30" stroke-width="1.6" fill="none"/><path d="M1071.6 100.5V899.3M1065.6 894.3H2026.4" stroke="#141516" stroke-width="1.6" fill="none"/><path d="M1085 100.5V422.9H1152.5M1939.9 422.9H2008V100.5M1152.5 100.5V490.4M1939.9 100.5V490.4" stroke="#a6a8aa" stroke-width="1.6" fill="none"/><path d="M1152.5 422.9H1939.9" stroke="#b8babc" stroke-width="2.4" fill="none"/><rect x="1153.6" y="490.4" width="785.1" height="357.9" stroke="#e6d9aa" stroke-width="2" fill="none"/><text x="1344" y="112" font-size="15" fill="#2a2c2e" font-family="Liberation Sans,sans-serif">+V</text><text x="2152" y="649" font-size="15" fill="#2a2c2e" font-family="Liberation Sans,sans-serif">+U</text></svg>
<svg class="a" style="left:2184px;top:100.5px;background:#45494d" width="1589" height="1089.3" viewBox="2184 100.5 1589 1089.3"><defs><clipPath id="ctop"><path d="M2540.1 366.1L2837.3 312.3L3460.3 926.5L3235.3 1119.8z"/></clipPath><clipPath id="cside"><path d="M2540.1 366.1L3235.3 1119.8L3185.3 1172.2L2513.9 428.4z"/></clipPath><clipPath id="cbox"><path d="M2540.1 366.1L2837.3 312.3L3460.3 926.5L3235.3 1119.8L3185.3 1172.2L2513.9 428.4z"/></clipPath></defs><path d="M2958.2 1521.4L3598.3 898.4M2900.8 1448.9L3559.1 860.9M2845 1378.5L3520.5 824.1M2790.8 1310L3482.6 787.8M2738.1 1243.4L3445.3 752.2M2686.8 1178.6L3408.6 717.1M2636.8 1115.5L3372.5 682.6M2588.2 1054.1L3336.9 648.7M2540.8 994.3L3302 615.3M2494.7 936.1L3267.6 582.4M2449.7 879.3L3233.7 550.1M2405.9 823.9L3200.3 518.2M2363.1 769.9L3167.5 486.9M2321.4 717.2L3135.2 456M2280.7 665.8L3103.3 425.6M2241 615.6L3072 395.6M2202.1 566.6L3041.1 366.1M2164.2 518.7L3010.7 337.1M2127.2 471.9L2980.7 308.4M2091 426.2L2951.2 280.2M2055.7 381.6L2922.1 252.4M2958.2 1521.4L2055.7 381.6M3010.9 1470.1L2120.9 371.8M3060.2 1422.1L2182.8 362.6M3106.3 1377.2L2241.5 353.8M3149.6 1335.1L2297.3 345.5M3190.3 1295.5L2350.5 337.6M3228.6 1258.2L2401.1 330.1M3264.7 1223.1L2449.5 322.8M3298.9 1189.8L2495.6 316M3331.2 1158.4L2539.7 309.4M3361.8 1128.6L2582 303.1M3390.9 1100.3L2622.4 297.1M3418.5 1073.4L2661.2 291.3M3444.8 1047.8L2698.4 285.7M3469.8 1023.5L2734.2 280.4M3493.7 1000.2L2768.5 275.3M3516.5 978L2801.6 270.4M3538.3 956.8L2833.4 265.6M3559.2 936.5L2864 261M3579.2 917L2893.6 256.6M3598.3 898.4L2922.1 252.4" stroke="#313436" stroke-width="1.2" fill="none"/><path d="M3418.5 1073.4L2661.2 291.3M2449.7 879.3L3233.7 550.1" stroke="#141516" stroke-width="1.6" fill="none"/><path d="M2540.1 366.1L2837.3 312.3L3460.3 926.5L3235.3 1119.8z" fill="#aaaaaa"/><path d="M2540.1 366.1L3235.3 1119.8L3185.3 1172.2L2513.9 428.4z" fill="#cbcbcb"/><g clip-path="url(#ctop)"><path d="M2541.7 365.2C2547.7 360.5 2563.3 358.5 2575.7 360.2C2588.2 361.9 2581.6 366.5 2588.4 371.6C2595.1 376.6 2592.2 372.7 2601 379.1C2609.7 385.5 2611.4 387.1 2621.2 395.5C2630.9 403.9 2631.9 405.6 2637.6 410.7C2643.3 415.7 2631.2 415 2642.6 414.5C2654.1 414 2661.3 410.5 2680.5 408.8C2699.7 407.1 2700.4 407 2714.6 408.2C2728.7 409.3 2726.6 409.8 2733.5 413.2C2740.4 416.6 2739.8 416.7 2740.4 420.8C2741.1 424.8 2742.9 423.3 2736 428.4C2729.1 433.4 2725 435.3 2714.6 439.7C2704.1 444.1 2707 445.9 2696.9 444.8C2686.8 443.6 2677.7 432.9 2676.7 435.3C2675.7 437.6 2687.7 447.4 2693.1 453.6C2698.5 459.8 2697.2 455.6 2696.9 458.6C2696.6 461.7 2697.9 461.9 2691.8 465C2685.8 468 2682.6 471 2674.2 470C2665.8 469 2666.4 468.9 2660.3 461.2C2654.2 453.4 2656.5 449.7 2651.5 441C2646.4 432.2 2645.4 426.3 2641.4 428.4C2637.3 430.4 2639 442.8 2636.3 448.5C2633.6 454.3 2633.1 451.8 2631.3 449.8C2629.4 447.8 2629.4 447 2629.4 441C2629.4 434.9 2634.5 429.8 2631.3 427.1C2628.1 424.4 2622.8 427.5 2617.4 430.9C2612 434.2 2615.4 440.4 2611.1 439.7C2606.7 439 2607 433.4 2601 428.4C2594.9 423.3 2593.7 425.5 2588.4 420.8C2583 416.1 2578.4 414.7 2580.8 410.7C2583.1 406.6 2597.2 407 2597.2 405.6C2597.2 404.3 2587.8 407.7 2580.8 405.6C2573.7 403.6 2578.1 405.5 2570.7 398.1C2563.3 390.7 2560.8 386.6 2553 377.9C2545.3 369.1 2535.6 370 2541.7 365.2z" fill="#a5837a"/><path d="M2761.7 349.4C2764.6 346.1 2765.8 345.2 2774 349.4C2782.3 353.5 2782.7 356.6 2792.5 364.8C2802.4 373 2802.4 372.8 2811.1 380.2C2819.7 387.6 2819.4 386.8 2824.9 392.5C2830.5 398.3 2830.2 396.9 2831.9 401.8C2833.5 406.7 2832.1 407.6 2831.1 411.1C2830.1 414.6 2823.9 413.9 2828 414.9C2832.1 415.9 2837.1 413.1 2846.5 414.9C2856 416.8 2855.3 417.5 2863.5 421.9C2871.7 426.2 2871.2 425.8 2877.4 431.1C2883.6 436.5 2883.6 436.8 2886.6 441.9C2889.7 447.1 2890.2 448.3 2889 450.4C2887.7 452.4 2888.8 450.7 2882 449.6C2875.2 448.6 2875.8 447.4 2863.5 446.5C2851.2 445.7 2838.2 444.1 2835.7 446.5C2833.3 449 2844.4 450.4 2854.2 455.8C2864.1 461.1 2869.5 464.1 2872.8 466.6C2876.1 469.1 2873.6 467.1 2866.6 465C2859.6 463 2855.2 461.8 2846.5 458.9C2837.9 456 2836.3 453 2834.2 454.2C2832.1 455.5 2831.4 456.1 2838.8 463.5C2846.2 470.9 2851.3 474.2 2862 482C2872.7 489.8 2874.8 487.9 2878.9 492.8C2883 497.7 2880.3 497.6 2877.4 500.5C2874.5 503.4 2874.3 503.2 2868.1 503.6C2862 504 2862.9 504.9 2854.2 502.1C2845.6 499.2 2844.4 498.2 2835.7 492.8C2827.1 487.5 2827.2 487.4 2821.9 482C2816.5 476.7 2818.6 470.7 2815.7 472.8C2812.8 474.8 2815.2 484.8 2811.1 489.7C2806.9 494.7 2811.4 491.3 2800.3 491.3C2789.2 491.3 2784.6 491 2769.4 489.7C2754.2 488.5 2754.7 489.1 2743.2 486.6C2731.7 484.2 2732.2 484.2 2726.2 480.5C2720.3 476.8 2721.2 476.9 2720.8 472.8C2720.4 468.6 2720.4 469.2 2724.7 465C2729 460.9 2727.1 461.9 2737 457.3C2746.9 452.8 2748.5 451.8 2761.7 448.1C2774.9 444.4 2774.9 444.9 2786.4 443.5C2797.9 442 2798.3 444.7 2804.9 442.7C2811.5 440.6 2812.3 439.6 2811.1 435.7C2809.8 431.8 2805.2 433 2800.3 428C2795.3 423.1 2797.1 424.6 2792.5 417.2C2788 409.8 2788.6 410.1 2783.3 400.3C2777.9 390.4 2777.8 390.5 2772.5 380.2C2767.1 369.9 2766.1 369.9 2763.2 361.7C2760.4 353.5 2758.8 352.7 2761.7 349.4z" fill="#946c90"/><path d="M2718.5 553.7C2713.1 541.5 2717.8 546.8 2721.9 541.9C2725.9 536.9 2727.8 535.2 2733.7 535.2C2739.5 535.2 2737.9 535.6 2743.8 541.9C2749.6 548.2 2749.3 547.5 2755.6 558.7C2761.8 569.9 2762 571 2767.3 584C2772.7 597 2772.6 597.2 2775.8 607.5C2778.9 617.9 2774.9 615.1 2779.1 622.7C2783.4 630.3 2781.4 631.2 2791.8 636.2C2802.1 641.1 2801.9 636.7 2817.8 641.2C2833.8 645.7 2835.4 646.7 2851.5 653C2867.7 659.3 2865.9 658.5 2878.5 664.8C2891 671.1 2891.2 671.2 2898.7 676.6C2906.1 682 2905.8 681.4 2906.2 685C2906.7 688.6 2908.2 688.5 2900.3 690C2892.5 691.6 2890.7 691.3 2876.8 690.9C2862.9 690.4 2858 689.5 2848.1 688.4C2838.3 687.2 2847.8 692.1 2839.7 686.7C2831.6 681.3 2830 679.4 2817.8 668.1C2805.7 656.9 2807.7 658.9 2794.3 644.6C2780.8 630.2 2781.3 629.5 2767.3 614.3C2753.4 599 2755.1 603.5 2742.1 587.3C2729.1 571.2 2723.9 565.8 2718.5 553.7z" fill="#a07f76"/><path d="M2923.9 663.1C2923 659.1 2925.6 659.5 2932.3 663.1C2939.1 666.7 2942 670.3 2949.2 676.6C2956.3 682.9 2953.9 685.3 2959.3 686.7C2964.6 688 2964 681.6 2969.4 681.6C2974.7 681.6 2976.3 683.5 2979.5 686.7C2982.6 689.8 2982.9 690.3 2981.1 693.4C2979.3 696.5 2972.3 696 2972.7 698.5C2973.2 700.9 2983.3 700.9 2982.8 702.7C2982.4 704.5 2970.1 702.7 2971 705.2C2971.9 707.7 2980.4 708.3 2986.2 711.9C2992 715.5 2992.9 715.5 2992.9 718.7C2992.9 721.8 2991.6 723.7 2986.2 723.7C2980.8 723.7 2977.2 717.8 2972.7 718.7C2968.2 719.6 2974.3 722.6 2969.4 727.1C2964.4 731.6 2959.6 734.6 2954.2 735.5C2948.8 736.4 2949.6 736.3 2949.2 730.4C2948.7 724.6 2948.9 721.7 2952.5 713.6C2956.1 705.5 2963.5 706.4 2962.6 700.1C2961.7 693.8 2956.3 695.9 2949.2 690C2942 684.2 2942.4 685.4 2935.7 678.2C2929 671.1 2924.8 667.1 2923.9 663.1z" fill="#ae88ae"/><path d="M2982 548.6C2985.6 547.7 2991.1 547.4 3000.5 549.5C3009.9 551.5 3011.5 556 3017.3 556.2C3023.2 556.4 3018.8 552.1 3022.4 550.3C3026 548.5 3026.8 547.7 3030.8 549.5C3034.8 551.3 3036.2 552.8 3037.5 557C3038.9 561.3 3033.6 563.2 3035.9 565.5C3038.1 567.7 3045.1 564.1 3046 565.5C3046.9 566.8 3037 568.3 3039.2 570.5C3041.5 572.7 3047.6 571.6 3054.4 573.9C3061.1 576.1 3061.8 575.8 3064.5 578.9C3067.2 582.1 3066.3 583.4 3064.5 585.7C3062.7 587.9 3059.1 583.3 3057.7 587.3C3056.4 591.4 3059.4 594.3 3059.4 600.8C3059.4 607.3 3059.5 608.6 3057.7 611.8C3055.9 614.9 3056.3 615.1 3052.7 612.6C3049.1 610.1 3048.3 609.2 3044.3 602.5C3040.2 595.8 3040.2 594.5 3037.5 587.3C3034.8 580.2 3037.8 580.5 3034.2 575.6C3030.6 570.6 3031.7 572.9 3024.1 568.8C3016.4 564.8 3015.4 564.7 3005.6 560.4C2995.7 556.1 2993.3 556 2987 552.8C2980.8 549.7 2978.4 549.5 2982 548.6z" fill="#5c4254"/><path d="M3123.4 664.8C3124.7 661.2 3125.2 663.7 3130.1 668.1C3135.1 672.6 3136.1 674 3141.9 681.6C3147.8 689.2 3148 690 3152 696.8C3156.1 703.5 3153 702.8 3157.1 706.9C3161.1 710.9 3159.5 709.7 3167.2 711.9C3174.8 714.2 3176.3 712.6 3185.7 715.3C3195.1 718 3195.6 718.4 3202.5 722C3209.5 725.6 3212.7 726.1 3211.8 728.8C3210.9 731.4 3207 731.2 3199.2 732.1C3191.3 733 3188.6 730.3 3182.3 732.1C3176 733.9 3180.1 737.1 3175.6 738.9C3171.1 740.7 3169.5 741.1 3165.5 738.9C3161.4 736.6 3162.2 735.8 3160.4 730.4C3158.6 725.1 3161.4 720.4 3158.8 718.7C3156.1 716.9 3152.1 725.1 3150.3 723.7C3148.5 722.4 3156.1 717.2 3152 713.6C3148 710 3141.9 712.9 3135.2 710.2C3128.5 707.5 3127.7 707.1 3126.8 703.5C3125.9 699.9 3132.3 702.6 3131.8 696.8C3131.4 690.9 3127.3 690.1 3125.1 681.6C3122.8 673.1 3122.1 668.4 3123.4 664.8z" fill="#b68aa2"/><path d="M3010.7 768.6C3016.1 768.2 3014.7 769.6 3017.4 773.7C3020.1 777.7 3020.4 777 3020.8 783.8C3021.3 790.5 3021.4 791.3 3019.1 798.9C3016.9 806.6 3015.5 807 3012.4 812.4C3009.2 817.8 3006.9 816 3007.3 819.1C3007.8 822.3 3008.7 820.1 3014.1 824.2C3019.5 828.2 3019.5 827.1 3027.5 834.3C3035.6 841.5 3036.3 842.6 3044.4 851.1C3052.5 859.6 3052 859.5 3057.8 866.3C3063.7 873 3065.4 872.8 3066.3 876.4C3067.2 880 3066.2 880.6 3061.2 879.7C3056.3 878.8 3055.8 877.5 3047.7 873C3039.7 868.5 3038.5 867.8 3030.9 862.9C3023.3 858 3024.1 859.4 3019.1 854.5C3014.2 849.5 3014.6 844.4 3012.4 844.4C3010.1 844.4 3013.4 851.3 3010.7 854.5C3008 857.6 3007.7 857.1 3002.3 856.2C2996.9 855.3 2996.8 855.2 2990.5 851.1C2984.2 847.1 2978.7 845.9 2978.7 841C2978.7 836.1 2985.6 837.1 2990.5 832.6C2995.4 828.1 3000.8 826.9 2997.2 824.2C2993.6 821.5 2982 823.8 2977 822.5C2972.1 821.1 2973.8 820 2978.7 819.1C2983.7 818.2 2992.4 820.9 2995.6 819.1C2998.7 817.3 2996.3 815.1 2990.5 812.4C2984.7 809.7 2980.9 811.3 2973.7 809C2966.5 806.8 2966.9 807.1 2963.6 804C2960.2 800.8 2960.6 800.4 2961 797.2C2961.5 794.1 2961.9 794.2 2965.3 792.2C2968.6 790.2 2968.3 789.2 2973.7 789.7C2979.1 790.1 2979.6 790.5 2985.5 793.9C2991.3 797.2 2995.1 804.5 2995.6 802.3C2996 800 2986.7 792.6 2987.1 785.5C2987.6 778.3 2991 779.8 2997.2 775.4C3003.5 770.9 3005.3 769.1 3010.7 768.6z" fill="#71595b"/><path d="M3219.6 796.8C3222.3 795 3222.2 794 3230.5 798.5C3238.8 803 3240.8 806.9 3250.7 813.7C3260.6 820.4 3259.5 817.5 3267.5 823.8C3275.6 830.1 3275.2 831 3281 837.2C3286.8 843.5 3285.8 841.1 3289.4 847.3C3293 853.6 3291.3 859.9 3294.5 860.8C3297.6 861.7 3296.3 853.4 3301.2 850.7C3306.2 848 3306.3 849.4 3313 850.7C3319.7 852.1 3320.2 852.2 3326.5 855.8C3332.7 859.3 3331.6 859.2 3336.6 864.2C3341.5 869.1 3342.3 869.8 3345 874.3C3347.7 878.8 3348.5 878.5 3346.7 881C3344.9 883.5 3333.3 868.7 3338.2 883.5C3343.2 898.4 3357.1 920.4 3365.2 936.6C3373.3 952.7 3369.5 940.3 3368.6 944.1C3367.7 948 3367.2 948 3361.8 950.9C3356.4 953.8 3354.6 955.3 3348.4 955.1C3342.1 954.9 3343.6 953.6 3338.2 950C3332.9 946.4 3334 946.6 3328.1 941.6C3322.3 936.7 3317.7 929.7 3316.4 931.5C3315 933.3 3322.2 941.2 3323.1 948.4C3324 955.5 3323.8 954 3319.7 958.5C3315.7 962.9 3315.6 960.7 3307.9 965.2C3300.3 969.7 3299.2 971.9 3291.1 975.3C3283 978.7 3283.9 980.1 3277.6 977.8C3271.4 975.6 3271.1 972.9 3267.5 966.9C3264 960.8 3264.2 962.3 3264.2 955.1C3264.2 947.9 3264 949.4 3267.5 939.9C3271.1 930.5 3272.3 929.2 3277.6 919.7C3283 910.3 3282.8 910.9 3287.7 904.6C3292.7 898.3 3295.7 900.2 3296.2 896.2C3296.6 892.1 3295.3 895.3 3289.4 889.4C3283.6 883.6 3282.4 883.3 3274.3 874.3C3266.2 865.3 3267.2 865.6 3259.1 855.8C3251 845.9 3251.6 846.7 3244 837.2C3236.3 827.8 3236.8 828.9 3230.5 820.4C3224.2 811.9 3223.3 811.5 3220.4 805.3C3217.5 799 3216.9 798.6 3219.6 796.8z" fill="#8d7468"/><path d="M3296.2 889.4C3296.2 884.9 3297.4 886.2 3304.6 884.4C3311.8 882.6 3313.2 882.2 3323.1 882.7C3333 883.1 3330.4 884.7 3341.6 886.1C3352.8 887.4 3354.4 886.8 3365.2 887.7C3376 888.6 3373.9 887.2 3382 889.4C3390.1 891.7 3390.5 893.9 3395.5 896.2C3400.4 898.4 3398.3 899.6 3400.5 897.8C3402.8 896 3404.4 895.7 3403.9 889.4C3403.5 883.1 3400.7 880.1 3398.9 874.3C3397.1 868.4 3393.6 865.7 3397.2 867.5C3400.8 869.3 3403.8 872 3412.3 881C3420.9 890 3421.1 892.2 3429.2 901.2C3437.2 910.2 3433.6 907 3442.6 914.7C3451.6 922.3 3461.5 924 3462.8 929.8C3464.2 935.7 3454.4 939.3 3447.7 936.6C3440.9 933.9 3443 926 3437.6 919.7C3432.2 913.4 3428.8 912.1 3427.5 913C3426.1 913.9 3428.5 915.9 3432.5 923.1C3436.6 930.3 3441.7 933.6 3442.6 939.9C3443.5 946.2 3441.3 952.1 3435.9 946.7C3430.5 941.3 3426.5 925.6 3422.4 919.7C3418.4 913.9 3418 916.7 3420.7 924.8C3423.4 932.9 3433.9 939.9 3432.5 950C3431.2 960.1 3422.9 960.9 3415.7 962.7C3408.5 964.5 3410.5 961.5 3405.6 956.8C3400.7 952.1 3400.8 951.7 3397.2 945C3393.6 938.2 3393.9 936.9 3392.1 931.5C3390.3 926.1 3393.1 923.9 3390.4 924.8C3387.7 925.7 3387 931.7 3382 934.9C3377.1 938 3378.7 937.9 3371.9 936.6C3365.2 935.2 3365.7 933.9 3356.8 929.8C3347.8 925.8 3348.1 926.4 3338.2 921.4C3328.4 916.5 3328.7 916.7 3319.7 911.3C3310.8 905.9 3310.9 907 3304.6 901.2C3298.3 895.4 3296.2 893.9 3296.2 889.4z" fill="#6a5155"/></g><g clip-path="url(#cside)"><path d="M2575.7 408.2C2574 410.8 2577.4 417.1 2580.8 425.8C2584.1 434.6 2583.6 433.9 2588.4 441C2593.1 448 2593.4 449.6 2598.4 452.3C2603.5 455 2604.6 454.1 2607.3 451.1C2610 448 2606.9 445 2608.5 441C2610.2 436.9 2617 441.3 2613.6 435.9C2610.2 430.5 2603 426.2 2595.9 420.8C2588.9 415.4 2592.5 419.1 2587.1 415.7C2581.7 412.4 2577.4 405.5 2575.7 408.2z" fill="#d6ae9c"/><path d="M2718.5 550.3C2712.2 549.5 2718.1 573.6 2723.6 587.3C2729.1 601.1 2735.8 602.9 2742.1 609.2C2748.4 615.5 2752.5 613.7 2750.5 614.3C2748.5 614.9 2739.2 610.6 2733.7 611.8C2728.2 612.9 2729.7 614 2726.9 619.3C2724.2 624.6 2722.3 626.2 2721.9 634.5C2721.5 642.7 2721.7 646.4 2725.3 654.7C2728.8 662.9 2731.1 667.9 2737 669.8C2742.9 671.8 2742.6 668.2 2750.5 663.1C2758.4 658 2767.6 643.6 2770.7 647.9C2773.8 652.3 2764 674.5 2764 681.6C2764 688.7 2766.8 684.1 2770.7 678.2C2774.6 672.4 2776.9 648.9 2780.8 656.4C2784.7 663.8 2784 695.1 2787.5 710.2C2791.1 725.4 2791.2 718.8 2796 721.2C2800.7 723.5 2803 722.1 2807.7 720.3C2812.5 718.6 2812.6 719.1 2816.2 713.6C2819.7 708.1 2822.5 706.6 2822.9 696.8C2823.3 686.9 2811.2 672.7 2817.8 671.5C2824.5 670.3 2857 698.8 2851.5 691.7C2846 684.6 2817.8 664.8 2794.3 641.2C2770.7 617.6 2768.2 611.9 2750.5 590.7C2732.8 569.5 2724.8 551.1 2718.5 550.3z" fill="#b48c80"/><path d="M3017.7 990.6C3015.8 986.3 3023.9 989.2 3029 992.3C3034.2 995.3 3035.2 997.6 3037.1 1001.9C3039 1006.2 3041.5 1011.4 3036.3 1008.4C3031.1 1005.4 3019.7 994.9 3017.7 990.6z" fill="#b48c80"/><path d="M3064.5 1040.6C3061.1 1035.1 3067.1 1036.1 3071 1037.4C3074.8 1038.7 3075.6 1039.9 3079 1045.5C3082.5 1051.1 3087.7 1059.7 3083.9 1058.4C3080 1057.1 3068 1046.2 3064.5 1040.6z" fill="#b48c80"/></g><path d="M3460.3 926.5L3235.3 1119.8L3238.3 1124.8L3463.3 931.5z" fill="#8e8e8e"/><path d="M2540.1 366.1L2837.3 312.3L3460.3 926.5L3235.3 1119.8z" fill="none" stroke="#f0e4b0" stroke-width="1.5"/><g clip-path="url(#cbox)"><path d="M2958.2 1521.4L3598.3 898.4M2900.8 1448.9L3559.1 860.9M2845 1378.5L3520.5 824.1M2790.8 1310L3482.6 787.8M2738.1 1243.4L3445.3 752.2M2686.8 1178.6L3408.6 717.1M2636.8 1115.5L3372.5 682.6M2588.2 1054.1L3336.9 648.7M2540.8 994.3L3302 615.3M2494.7 936.1L3267.6 582.4M2449.7 879.3L3233.7 550.1M2405.9 823.9L3200.3 518.2M2363.1 769.9L3167.5 486.9M2321.4 717.2L3135.2 456M2280.7 665.8L3103.3 425.6M2241 615.6L3072 395.6M2202.1 566.6L3041.1 366.1M2164.2 518.7L3010.7 337.1M2127.2 471.9L2980.7 308.4M2091 426.2L2951.2 280.2M2055.7 381.6L2922.1 252.4M2958.2 1521.4L2055.7 381.6M3010.9 1470.1L2120.9 371.8M3060.2 1422.1L2182.8 362.6M3106.3 1377.2L2241.5 353.8M3149.6 1335.1L2297.3 345.5M3190.3 1295.5L2350.5 337.6M3228.6 1258.2L2401.1 330.1M3264.7 1223.1L2449.5 322.8M3298.9 1189.8L2495.6 316M3331.2 1158.4L2539.7 309.4M3361.8 1128.6L2582 303.1M3390.9 1100.3L2622.4 297.1M3418.5 1073.4L2661.2 291.3M3444.8 1047.8L2698.4 285.7M3469.8 1023.5L2734.2 280.4M3493.7 1000.2L2768.5 275.3M3516.5 978L2801.6 270.4M3538.3 956.8L2833.4 265.6M3559.2 936.5L2864 261M3579.2 917L2893.6 256.6M3598.3 898.4L2922.1 252.4" stroke="#262628" stroke-width="1.3" fill="none"/><path d="M3418.5 1073.4L2661.2 291.3M2449.7 879.3L3233.7 550.1" stroke="#121212" stroke-width="1.5" fill="none"/></g><path d="M2536 417C2538.1 410.6 2536.5 409.6 2541.7 405.6C2546.8 401.7 2545.8 403.2 2553 403.7C2560.2 404.3 2561.3 403.9 2565.6 407.5C2570 411.1 2568.3 408.7 2567.5 415.7C2566.8 422.7 2566.1 421.4 2563.1 430.9C2560.1 440.3 2560.6 440.5 2557.4 447.3C2554.2 454.1 2556.4 453.2 2552.4 453.6C2548.4 454 2548.5 453.1 2544.2 448.5C2539.8 444 2540.7 444.9 2537.9 438.4C2535 432 2535.3 433.5 2534.7 427.1C2534.1 420.7 2533.9 423.4 2536 417z" fill="none" stroke="#14148c" stroke-width="7" stroke-linejoin="round"/><path d="M2811.1 334.7C2812.9 332.4 2811.2 330.7 2817.2 327C2823.2 323.3 2822.6 324 2831.1 322.4C2839.7 320.7 2841.4 321.8 2845.8 321.6" fill="none" stroke="#8800aa" stroke-width="5.6" stroke-linecap="round" stroke-linejoin="round"/><path d="M2839.6 334.7C2838.4 336.8 2834.6 338.2 2835.7 341.6C2836.9 345.1 2837 344.7 2843.5 346.3C2849.9 347.9 2853.2 346.8 2857.3 347" fill="none" stroke="#8800aa" stroke-width="5.6" stroke-linecap="round" stroke-linejoin="round"/><path d="M2868.1 357.1C2866.7 360.3 2861.7 363.5 2863.5 367.9C2865.4 372.3 2866.4 371 2874.3 371.7C2882.2 372.4 2885.1 370.6 2889.7 370.2" fill="none" stroke="#8800aa" stroke-width="5.6" stroke-linecap="round" stroke-linejoin="round"/><path d="M2877.4 386.4C2881.1 386.8 2882.3 389.8 2889.7 387.9C2897.1 386.1 2898.8 383.7 2902.1 380.2C2905.3 376.7 2901 377.5 2900.5 376.4" fill="none" stroke="#8800aa" stroke-width="5.6" stroke-linecap="round" stroke-linejoin="round"/><path d="M3171.8 1071.3C3175.9 1073.7 3176.5 1073.1 3185.5 1079.4C3194.4 1085.6 3193.4 1084.5 3201.6 1092.3C3209.8 1100 3208.8 1098.4 3212.9 1105.2C3217 1111.9 3216.8 1109 3215.3 1114.8C3213.9 1120.6 3214.6 1119.7 3208.1 1124.5C3201.5 1129.4 3201.8 1128.5 3193.5 1131C3185.3 1133.4 3188.4 1134.5 3180.6 1132.6C3172.9 1130.6 3175.2 1130.8 3167.7 1124.5C3160.2 1118.2 3159.3 1115.5 3155.6 1111.6" fill="none" stroke="#14148c" stroke-width="9" stroke-linecap="round" stroke-linejoin="round"/><path d="M3217.7 1140.6L3232.3 1127.7" stroke="#5aa020" stroke-width="2.4"/><path d="M3400.5 983.7L3435.9 950" stroke="#5aa020" stroke-width="2.4"/><text x="2598" y="299" font-size="15" fill="#2a2c2e" font-family="Liberation Sans,sans-serif">+X</text><text x="3241" y="556" font-size="15" fill="#2a2c2e" font-family="Liberation Sans,sans-serif">+Z</text><text x="2458" y="892" font-size="15" fill="#2a2c2e" font-family="Liberation Sans,sans-serif">−Z</text><text x="3374" y="1113" font-size="15" fill="#2a2c2e" font-family="Liberation Sans,sans-serif">−X</text></svg>
<div class="a" style="left:2177.8px;top:76.4px;width:6.2px;height:1955.5px;background:#303032"></div>
<div class="a" style="left:2179.2px;top:77.2px;width:3.4px;height:1954px;background:#3e3e40"></div>
<div class="b " style="left:531px;top:77px;width:114.6px;height:22px;line-height:22px;border-radius:0;box-shadow:none;line-height:22.5px"><span class="t" style="left:8px;"><span class="f" style=";transform:scaleX(0.899)">UV</span></span><i class="tri" style="right:6px;top:8px;border-left-width:6px;border-right-width:6px;border-top:7px solid #d4d4d4"></i></div><div class="b " style="left:648px;top:77px;width:131px;height:22px;line-height:22px;border-radius:0;box-shadow:none;line-height:22.5px"><span class="t" style="left:6.7px;"><span class="f" style=";transform:scaleX(0.854)">(なし)</span></span><i class="tri" style="right:6px;top:8px;border-left-width:6px;border-right-width:6px;border-top:7px solid #d4d4d4"></i></div><div class="a" style="left:2059px;top:77px;width:28.3px;height:22px;background:#58585c"><svg width="28.3" height="22" viewBox="0 0 28 22"><path d="M14 3l3.5 4h-2.6v5.1H20V9.5l4 3.5-4 3.5v-2.6h-5.1V19h2.6L14 23l-3.5-4h2.6v-5.1H8v2.6L4 13l4-3.5v2.6h5.1V7h-2.6z" fill="#e2e2e2" transform="translate(0,-2)"/></svg></div><div class="a" style="left:2089px;top:77px;width:28.3px;height:22px;background:#58585c"><svg width="28.3" height="22" viewBox="0 0 28 22"><g fill="none" stroke="#3e3e42" stroke-width="1.8"><path d="M6 12c0-3.5 4-5 9-5"/><path d="M22 10c0 3.5-4 5-9 5"/></g><path d="M14 3.5l4.5 3.5-4.5 3.5z" fill="#3e3e42"/><path d="M14 11.5l-4.5 3.5 4.5 3.5z" fill="#3e3e42"/></svg></div><div class="a" style="left:2119px;top:77px;width:28.3px;height:22px;background:#58585c"><svg width="28.3" height="22" viewBox="0 0 28 22"><circle cx="12" cy="9.5" r="5.8" fill="none" stroke="#e2e2e2" stroke-width="1.8"/><path d="M16.5 14l6 5.5" stroke="#e2e2e2" stroke-width="3"/></svg></div><div class="a" style="left:2149px;top:77px;width:28.3px;height:22px;background:#58585c"><svg width="28.3" height="22" viewBox="0 0 28 22"><rect x="6.9" y="4.2" width="14.8" height="14.4" fill="none" stroke="#e2e2e2" stroke-width="1.6"/><path d="M7.6 8.7H18.2V17.9z" fill="#e2e2e2"/></svg></div>
<div class="a" style="left:781px;top:77px;width:108px;height:22px;background:#4b6c9a;line-height:22px;color:#e6e6e6;white-space:nowrap;letter-spacing:.4px"><span style="left:8px"><span class="f" style=";transform:scaleX(0.924)">Free Move</span></span></div>
<div class="b " style="left:2184px;top:77px;width:115px;height:22px;line-height:22px;border-radius:0;box-shadow:none;line-height:22.5px"><span class="t" style="left:6.3px;"><span class="f" style=";transform:scaleX(0.996)">パース</span></span><i class="tri" style="right:6px;top:8px;border-left-width:6px;border-right-width:6px;border-top:7px solid #d4d4d4"></i></div><div class="b " style="left:2301px;top:77px;width:174px;height:22px;line-height:22px;border-radius:0;box-shadow:none;line-height:22.5px"><span class="t" style="left:5.7px;"><span class="f" style=";transform:scaleX(0.884)">テクスチャ</span></span><i class="tri" style="right:6px;top:8px;border-left-width:6px;border-right-width:6px;border-top:7px solid #d4d4d4"></i></div><div class="a" style="left:3654px;top:77px;width:28.3px;height:22px;background:#58585c"><svg width="28.3" height="22" viewBox="0 0 28 22"><path d="M14 3l3.5 4h-2.6v5.1H20V9.5l4 3.5-4 3.5v-2.6h-5.1V19h2.6L14 23l-3.5-4h2.6v-5.1H8v2.6L4 13l4-3.5v2.6h5.1V7h-2.6z" fill="#e2e2e2" transform="translate(0,-2)"/></svg></div><div class="a" style="left:3684px;top:77px;width:28.3px;height:22px;background:#58585c"><svg width="28.3" height="22" viewBox="0 0 28 22"><g fill="none" stroke="#e2e2e2" stroke-width="1.8"><path d="M6 12c0-3.5 4-5 9-5"/><path d="M22 10c0 3.5-4 5-9 5"/></g><path d="M14 3.5l4.5 3.5-4.5 3.5z" fill="#e2e2e2"/><path d="M14 11.5l-4.5 3.5 4.5 3.5z" fill="#e2e2e2"/></svg></div><div class="a" style="left:3714px;top:77px;width:28.3px;height:22px;background:#58585c"><svg width="28.3" height="22" viewBox="0 0 28 22"><circle cx="12" cy="9.5" r="5.8" fill="none" stroke="#e2e2e2" stroke-width="1.8"/><path d="M16.5 14l6 5.5" stroke="#e2e2e2" stroke-width="3"/></svg></div><div class="a" style="left:3744px;top:77px;width:28.3px;height:22px;background:#58585c"><svg width="28.3" height="22" viewBox="0 0 28 22"><rect x="6.9" y="4.2" width="14.8" height="14.4" fill="none" stroke="#e2e2e2" stroke-width="1.6"/><path d="M7.6 8.7H18.2V17.9z" fill="#e2e2e2"/></svg></div>
<div class="b " style="left:531px;top:1196px;width:115px;height:22px;line-height:22px;border-radius:0;box-shadow:none;line-height:20.5px"><span class="t" style="left:6.2px;"><span class="f" style=";transform:scaleX(1.000)">背面</span><span style="left:50.5px;top:0"><span class="f" style=";transform:scaleX(0.922)">(XY)</span></span></span><i class="tri" style="right:6px;top:8px;border-left-width:6px;border-right-width:6px;border-top:7px solid #d4d4d4"></i></div><div class="b " style="left:648px;top:1196px;width:174px;height:22px;line-height:22px;border-radius:0;box-shadow:none;line-height:20.5px"><span class="t" style="left:8px;"><span class="f" style=";transform:scaleX(0.928)">ワイヤーフレーム</span></span><i class="tri" style="right:6px;top:8px;border-left-width:6px;border-right-width:6px;border-top:7px solid #d4d4d4"></i></div><div class="a" style="left:2059px;top:1196px;width:28.3px;height:22px;background:#58585c"><svg width="28.3" height="22" viewBox="0 0 28 22"><path d="M14 3l3.5 4h-2.6v5.1H20V9.5l4 3.5-4 3.5v-2.6h-5.1V19h2.6L14 23l-3.5-4h2.6v-5.1H8v2.6L4 13l4-3.5v2.6h5.1V7h-2.6z" fill="#e2e2e2" transform="translate(0,-2)"/></svg></div><div class="a" style="left:2089px;top:1196px;width:28.3px;height:22px;background:#58585c"><svg width="28.3" height="22" viewBox="0 0 28 22"><g fill="none" stroke="#3e3e42" stroke-width="1.8"><path d="M6 12c0-3.5 4-5 9-5"/><path d="M22 10c0 3.5-4 5-9 5"/></g><path d="M14 3.5l4.5 3.5-4.5 3.5z" fill="#3e3e42"/><path d="M14 11.5l-4.5 3.5 4.5 3.5z" fill="#3e3e42"/></svg></div><div class="a" style="left:2119px;top:1196px;width:28.3px;height:22px;background:#58585c"><svg width="28.3" height="22" viewBox="0 0 28 22"><circle cx="12" cy="9.5" r="5.8" fill="none" stroke="#e2e2e2" stroke-width="1.8"/><path d="M16.5 14l6 5.5" stroke="#e2e2e2" stroke-width="3"/></svg></div><div class="a" style="left:2149px;top:1196px;width:28.3px;height:22px;background:#58585c"><svg width="28.3" height="22" viewBox="0 0 28 22"><rect x="6.9" y="4.2" width="14.8" height="14.4" fill="none" stroke="#e2e2e2" stroke-width="1.6"/><path d="M7.6 8.7H18.2V17.9z" fill="#e2e2e2"/></svg></div>
<div class="b " style="left:2184px;top:1196px;width:115px;height:22px;line-height:22px;border-radius:0;box-shadow:none;line-height:20.5px"><span class="t" style="left:6.2px;"><span class="f" style=";transform:scaleX(1.000)">右面</span><span style="left:50.5px;top:0"><span class="f" style=";transform:scaleX(0.949)">(ZY)</span></span></span><i class="tri" style="right:6px;top:8px;border-left-width:6px;border-right-width:6px;border-top:7px solid #d4d4d4"></i></div><div class="b " style="left:2301px;top:1196px;width:174px;height:22px;line-height:22px;border-radius:0;box-shadow:none;line-height:20.5px"><span class="t" style="left:8px;"><span class="f" style=";transform:scaleX(0.928)">ワイヤーフレーム</span></span><i class="tri" style="right:6px;top:8px;border-left-width:6px;border-right-width:6px;border-top:7px solid #d4d4d4"></i></div><div class="a" style="left:3654px;top:1196px;width:28.3px;height:22px;background:#58585c"><svg width="28.3" height="22" viewBox="0 0 28 22"><path d="M14 3l3.5 4h-2.6v5.1H20V9.5l4 3.5-4 3.5v-2.6h-5.1V19h2.6L14 23l-3.5-4h2.6v-5.1H8v2.6L4 13l4-3.5v2.6h5.1V7h-2.6z" fill="#e2e2e2" transform="translate(0,-2)"/></svg></div><div class="a" style="left:3684px;top:1196px;width:28.3px;height:22px;background:#58585c"><svg width="28.3" height="22" viewBox="0 0 28 22"><g fill="none" stroke="#3e3e42" stroke-width="1.8"><path d="M6 12c0-3.5 4-5 9-5"/><path d="M22 10c0 3.5-4 5-9 5"/></g><path d="M14 3.5l4.5 3.5-4.5 3.5z" fill="#3e3e42"/><path d="M14 11.5l-4.5 3.5 4.5 3.5z" fill="#3e3e42"/></svg></div><div class="a" style="left:3714px;top:1196px;width:28.3px;height:22px;background:#58585c"><svg width="28.3" height="22" viewBox="0 0 28 22"><circle cx="12" cy="9.5" r="5.8" fill="none" stroke="#e2e2e2" stroke-width="1.8"/><path d="M16.5 14l6 5.5" stroke="#e2e2e2" stroke-width="3"/></svg></div><div class="a" style="left:3744px;top:1196px;width:28.3px;height:22px;background:#58585c"><svg width="28.3" height="22" viewBox="0 0 28 22"><rect x="6.9" y="4.2" width="14.8" height="14.4" fill="none" stroke="#e2e2e2" stroke-width="1.6"/><path d="M7.6 8.7H18.2V17.9z" fill="#e2e2e2"/></svg></div>
<div class="a" style="left:528px;top:2031.5px;width:3247px;height:59px;background:#3e3e40"></div>
<div class="a" style="left:529.3px;top:2036px;width:165.5px;height:25px;background:#343436"></div>
<div class="a" style="left:698.6px;top:2036px;width:164.5px;height:25px;background:#343436"></div>
<div class="a" style="left:867px;top:2036px;width:2497px;height:25px;background:#343436"></div>
<div class="a" style="left:535px;top:2036px;height:25px;line-height:25px;color:#c8c8c8;white-space:nowrap">選択:</div>
<div class="a" style="left:660px;top:2036px;width:30px;text-align:right;height:25px;line-height:25px;color:#c8c8c8">1</div>
<div class="b" style="left:3369px;top:2038px;width:162px;height:22px;"></div>
<div class="a" style="left:3369px;top:2038px;width:32px;height:22px;text-align:center;line-height:22px;color:#dcdcdc">W</div>
<div class="a" style="left:3401px;top:2038px;width:32.5px;height:22px;background:#4b6c9a;text-align:center;line-height:22px;color:#dcdcdc">T</div>
<div class="a" style="left:3433.5px;top:2038px;width:33.5px;height:22px;text-align:center;line-height:22px;color:#dcdcdc">M</div>
<div class="a" style="left:3467px;top:2038px;width:33px;height:22px;text-align:center;line-height:22px;color:#dcdcdc">C</div>
<div class="a" style="left:3500px;top:2038px;width:31px;height:22px;text-align:center;line-height:22px;color:#dcdcdc">S</div>
<div class="a" style="left:3400.5px;top:2038px;width:1px;height:22px;background:#4a4a4e"></div>
<div class="a" style="left:3433px;top:2038px;width:1px;height:22px;background:#4a4a4e"></div>
<div class="a" style="left:3466.5px;top:2038px;width:1px;height:22px;background:#4a4a4e"></div>
<div class="a" style="left:3499.5px;top:2038px;width:1px;height:22px;background:#4a4a4e"></div>
<div class="b " style="left:3535px;top:2038px;width:238px;height:22px;line-height:22px;"><span class="t" style="left:7px;"><span class="f" style=";transform:scaleX(0.903)">box05</span></span><i class="tri" style="right:7px;top:7.5px;border-left-width:7px;border-right-width:7px;border-top:8px solid #d4d4d4"></i></div>
<div class="b " style="left:530px;top:2066px;width:139.7px;height:22px;line-height:22px;"><span class="t" style="left:3px;">ツール解除</span><span class="sc">ret</span></div>
<div class="b " style="left:671.6px;top:2066px;width:139.7px;height:22px;line-height:22px;"><span class="t" style="left:3px;">選択解除</span></div>
<div class="b " style="left:818px;top:2066px;width:140px;height:22px;line-height:22px;"><span class="t" style="left:3px;">ポイント</span><span class="sc">^G</span></div>
<div class="b " style="left:959.8px;top:2066px;width:139.2px;height:22px;line-height:22px;"><span class="t" style="left:3px;">エッジ</span></div>
<div class="b sel" style="left:1100.7px;top:2066px;width:139.3px;height:22px;line-height:22px;"><span class="t" style="left:3px;">ポリゴン</span><span class="sc">^H</span></div>
<div class="b " style="left:1241.4px;top:2066px;width:139.6px;height:22px;line-height:22px;"><span class="t" style="left:3px;">ボリューム</span><span class="sc">^J</span></div>
<div class="b " style="left:1388.9px;top:2066px;width:139.7px;height:22px;line-height:22px;"><span class="t" style="left:3px;">対称</span><span class="sc">+Y</span></div>
<div class="b " style="left:1535px;top:2066px;width:140px;height:22px;line-height:22px;"><span class="t" style="left:3px;">モード</span><i class="tri" style="right:7px;top:8.5px;border-left-width:5.5px;border-right-width:5.5px;border-top:6px solid #d4d4d4"></i></div>
<div class="b " style="left:1677px;top:2066px;width:139px;height:22px;line-height:22px;"><span class="t" style="left:3px;">SubD種</span><i class="tri" style="right:7px;top:8.5px;border-left-width:5.5px;border-right-width:5.5px;border-top:6px solid #d4d4d4"></i></div>
<div class="b " style="left:1817.8px;top:2066px;width:139px;height:22px;line-height:22px;"><span class="t" style="left:3px;">定番のパネル</span><i class="tri" style="right:7px;top:8.5px;border-left-width:5.5px;border-right-width:5.5px;border-top:6px solid #d4d4d4"></i></div>
<div class="b " style="left:1964.6px;top:2066px;width:139.7px;height:22px;line-height:22px;background:#48484b;color:#66666a"><span class="t" style="left:3px;">リドゥ</span></div>
<div class="a" style="left:2090px;top:1272px;width:508px;height:528px;background:#5a5a5c;box-shadow:0 2px 10px rgba(0,0,0,.45)"></div><div class="a" style="left:2091px;top:1319px;width:506px;height:479.5px;background:#3e3e40"></div><div class="a" style="left:2091px;top:1273px;width:506px;height:46px;background:#fff"></div><svg class="a" style="left:2103px;top:1283px" width="24" height="24" viewBox="0 0 24 24"><rect width="24" height="24" fill="#060606"/><rect x="1.3" y="1.3" width="20.7" height="21.4" fill="#f29c1e"/><rect x="1.3" y="1.3" width="13.5" height="8" fill="#6a6a6c"/><rect x="14.2" y="1.3" width="8.6" height="9.2" fill="#151515"/><path d="M1.3 4l2.6 2-.9-3.4 3.2 2.8L9.5 1.4l1.6 3.2 2-1 1.1 3.4.4 4.6H1.3z" fill="#e9aa4c"/><path d="M15 1.8h1.9l1.7 3.4 1.7-3.4h1.9v7h-1.7V4.9l-1.4 2.7h-1l-1.4-2.7v3.9H15z" fill="#fff"/><circle cx="18.6" cy="13.6" r="3.3" fill="#f29c1e"/><circle cx="11" cy="17" r="5.3" fill="none" stroke="#5e3c12" stroke-width="1.3"/><path d="M14.5 14.5a4 4 0 1 0 .8 4" fill="none" stroke="#8a5a14" stroke-width="1"/><rect x="9" y="15" width="3.2" height="3.6" rx="1" fill="#33343a"/><path d="M17.6 12.4l1.4 1.6 1-1.6z" fill="#5e3c12"/><rect x="21.2" y="18.5" width="1.6" height="4.3" fill="#111"/></svg><div class="a tt" style="left:2132.6px;top:1273px;height:46px;line-height:47px;color:#9a9a9a"><span class="f" style="font-weight:400;transform:scaleX(0.814)">UVテクスチャマップ作成</span></div><div class="a" style="left:2415px;top:1295px;width:15px;height:1.3px;background:#8a8a8a"></div><div class="a" style="left:2484.5px;top:1288px;width:15px;height:15px;box-sizing:border-box;border:1.3px solid #777"></div><svg class="a" style="left:2555px;top:1288px" width="15" height="15"><path d="M0 0L15 15M15 0L0 15" stroke="#8a8a8a" stroke-width="1.2"/></svg><div class="lbl" style="left:2131px;top:1329px;width:200.5px;height:25.5px;line-height:25.5px;color:#d2d2d2">テクスチャ名</div><div class="inp" style="left:2342px;top:1328.5px;width:211.5px;height:27px;line-height:27px"><span class="t" style="left:11px"><span class="f" style=";transform:scaleX(0.913)">box05</span></span></div><div class="b" style="left:2557.6px;top:1329.5px;width:26.4px;height:25px;"><i class="tri" style="left:6px;top:9px;border-left-width:7px;border-right-width:7px;border-top:8px solid #d4d4d4"></i></div><div class="b " style="left:2343px;top:1362.5px;width:241px;height:25.5px;line-height:25.5px;"><span class="t" style="left:36px;">初期値</span></div><div class="a" style="left:2343px;top:1362.5px;width:30px;height:25.5px;background:#4b6c9a;border-radius:4px 0 0 4px"><svg width="30" height="26"><path d="M8 13l5 5 9-10" fill="none" stroke="#f0f0f0" stroke-width="2.4"/></svg></div><div class="lbl" style="left:2131px;top:1395.5px;width:200.5px;height:25.5px;line-height:25.5px;color:#d2d2d2">マップ種別</div><div class="b " style="left:2343px;top:1395.5px;width:241px;height:25.5px;line-height:25.5px;"><span class="t" style="left:7px;">平面状</span><i class="tri" style="right:6px;top:9.2px;border-left-width:7px;border-right-width:7px;border-top:8px solid #d4d4d4"></i></div><div class="lbl" style="left:2131px;top:1428.5px;width:200.5px;height:25.5px;line-height:25.5px;color:#d2d2d2">サブパッチ補間</div><div class="b " style="left:2343px;top:1428.5px;width:241px;height:25.5px;line-height:25.5px;"><span class="t" style="left:7px;">リニア</span><i class="tri" style="right:6px;top:9.2px;border-left-width:7px;border-right-width:7px;border-top:8px solid #d4d4d4"></i></div><div class="b " style="left:2343px;top:1461.5px;width:241px;height:25.5px;line-height:25.5px;"><span class="t" style="left:37px;">制御ポイント移動</span></div><div class="a" style="left:2373px;top:1461.5px;width:1px;height:25.5px;background:#4a4a4e"></div><div class="lbl" style="left:2131px;top:1494.5px;width:200.5px;height:25.5px;line-height:25.5px;color:#d2d2d2">軸</div><div class="b " style="left:2343px;top:1494.5px;width:241px;height:25.5px;line-height:25.5px;"><span class="t" style="left:8px;">X</span></div><div class="a" style="left:2423.4px;top:1494.5px;width:80.6px;height:25.5px;background:#4b6c9a;line-height:25.5px"><span style="left:8px">Y</span></div><div class="a" style="left:2504px;top:1494.5px;width:1px;height:25.5px;background:#4a4a4e"></div><div class="a" style="left:2504px;top:1494.5px;width:80px;height:25.5px;line-height:25.5px"><span style="left:9px">Z</span></div><div class="lbl" style="left:2131px;top:1527.5px;width:200.5px;height:25.5px;line-height:25.5px;color:#d2d2d2">設定</div><div class="b " style="left:2343px;top:1527.5px;width:241px;height:25.5px;line-height:25.5px;"><span class="t" style="left:8px;"></span></div><div class="a" style="left:2343px;top:1527.5px;width:120.3px;height:25.5px;background:#4b6c9a;line-height:25.5px;border-radius:4px 0 0 4px;white-space:nowrap"><span style="left:8px">自動</span></div><div class="a" style="left:2463.3px;top:1527.5px;width:120px;height:25.5px;line-height:25.5px;white-space:nowrap;font-feature-settings:'palt'"><span style="left:8px">マニュアル</span></div><div class="lbl" style="left:2131px;top:1560px;width:200.5px;height:25.5px;line-height:25.5px;color:#1c1c1e">中心 X</div><div class="inp" style="left:2342px;top:1559.5px;width:211.5px;height:27px;line-height:27px;color:#b4b4b6"><span class="t" style="left:12px"><span class="f" style=";transform:scaleX(0.891)">−0.2384 um</span></span></div><div class="b" style="left:2557.6px;top:1561px;width:26.4px;height:24.5px;background:#4c4c50"><svg width="26" height="25"><path d="M5 12.5l6-6v12zM21 12.5l-6-6v12z" fill="#2c2c2e"/></svg></div><div class="lbl" style="left:2131px;top:1593px;width:200.5px;height:25.5px;line-height:25.5px;color:#1c1c1e">Y</div><div class="inp" style="left:2342px;top:1592.5px;width:211.5px;height:27px;line-height:27px;color:#b4b4b6"><span class="t" style="left:12px"><span class="f" style=";transform:scaleX(0.888)">31.698 mm</span></span></div><div class="b" style="left:2557.6px;top:1594px;width:26.4px;height:24.5px;background:#4c4c50"><svg width="26" height="25"><path d="M5 12.5l6-6v12zM21 12.5l-6-6v12z" fill="#2c2c2e"/></svg></div><div class="lbl" style="left:2131px;top:1626px;width:200.5px;height:25.5px;line-height:25.5px;color:#1c1c1e">Z</div><div class="inp" style="left:2342px;top:1625.5px;width:211.5px;height:27px;line-height:27px;color:#b4b4b6"><span class="t" style="left:12px"><span class="f" style=";transform:scaleX(0.890)">0 m</span></span></div><div class="b" style="left:2557.6px;top:1627px;width:26.4px;height:24.5px;background:#4c4c50"><svg width="26" height="25"><path d="M5 12.5l6-6v12zM21 12.5l-6-6v12z" fill="#2c2c2e"/></svg></div><div class="lbl" style="left:2131px;top:1659px;width:200.5px;height:25.5px;line-height:25.5px;color:#1c1c1e">サイズ X</div><div class="inp" style="left:2342px;top:1658.5px;width:211.5px;height:27px;line-height:27px;color:#b4b4b6"><span class="t" style="left:12px"><span class="f" style=";transform:scaleX(0.864)">8.7 m</span></span></div><div class="b" style="left:2557.6px;top:1660px;width:26.4px;height:24.5px;background:#4c4c50"><svg width="26" height="25"><path d="M5 12.5l6-6v12zM21 12.5l-6-6v12z" fill="#2c2c2e"/></svg></div><div class="lbl" style="left:2131px;top:1692px;width:200.5px;height:25.5px;line-height:25.5px;color:#1c1c1e">Y</div><div class="inp" style="left:2342px;top:1691.5px;width:211.5px;height:27px;line-height:27px;color:#b4b4b6"><span class="t" style="left:12px"><span class="f" style=";transform:scaleX(0.878)">0.0335 um</span></span></div><div class="b" style="left:2557.6px;top:1693px;width:26.4px;height:24.5px;background:#4c4c50"><svg width="26" height="25"><path d="M5 12.5l6-6v12zM21 12.5l-6-6v12z" fill="#2c2c2e"/></svg></div><div class="lbl" style="left:2131px;top:1725px;width:200.5px;height:25.5px;line-height:25.5px;color:#1c1c1e">Z</div><div class="inp" style="left:2342px;top:1724.5px;width:211.5px;height:27px;line-height:27px;color:#b4b4b6"><span class="t" style="left:12px"><span class="f" style=";transform:scaleX(0.860)">3.95 m</span></span></div><div class="b" style="left:2557.6px;top:1726px;width:26.4px;height:24.5px;background:#4c4c50"><svg width="26" height="25"><path d="M5 12.5l6-6v12zM21 12.5l-6-6v12z" fill="#2c2c2e"/></svg></div><div class="b " style="left:2343px;top:1758.7px;width:241px;height:25.5px;line-height:25.5px;"><span class="t" style="left:7px;">作成</span></div>
</body></html>
